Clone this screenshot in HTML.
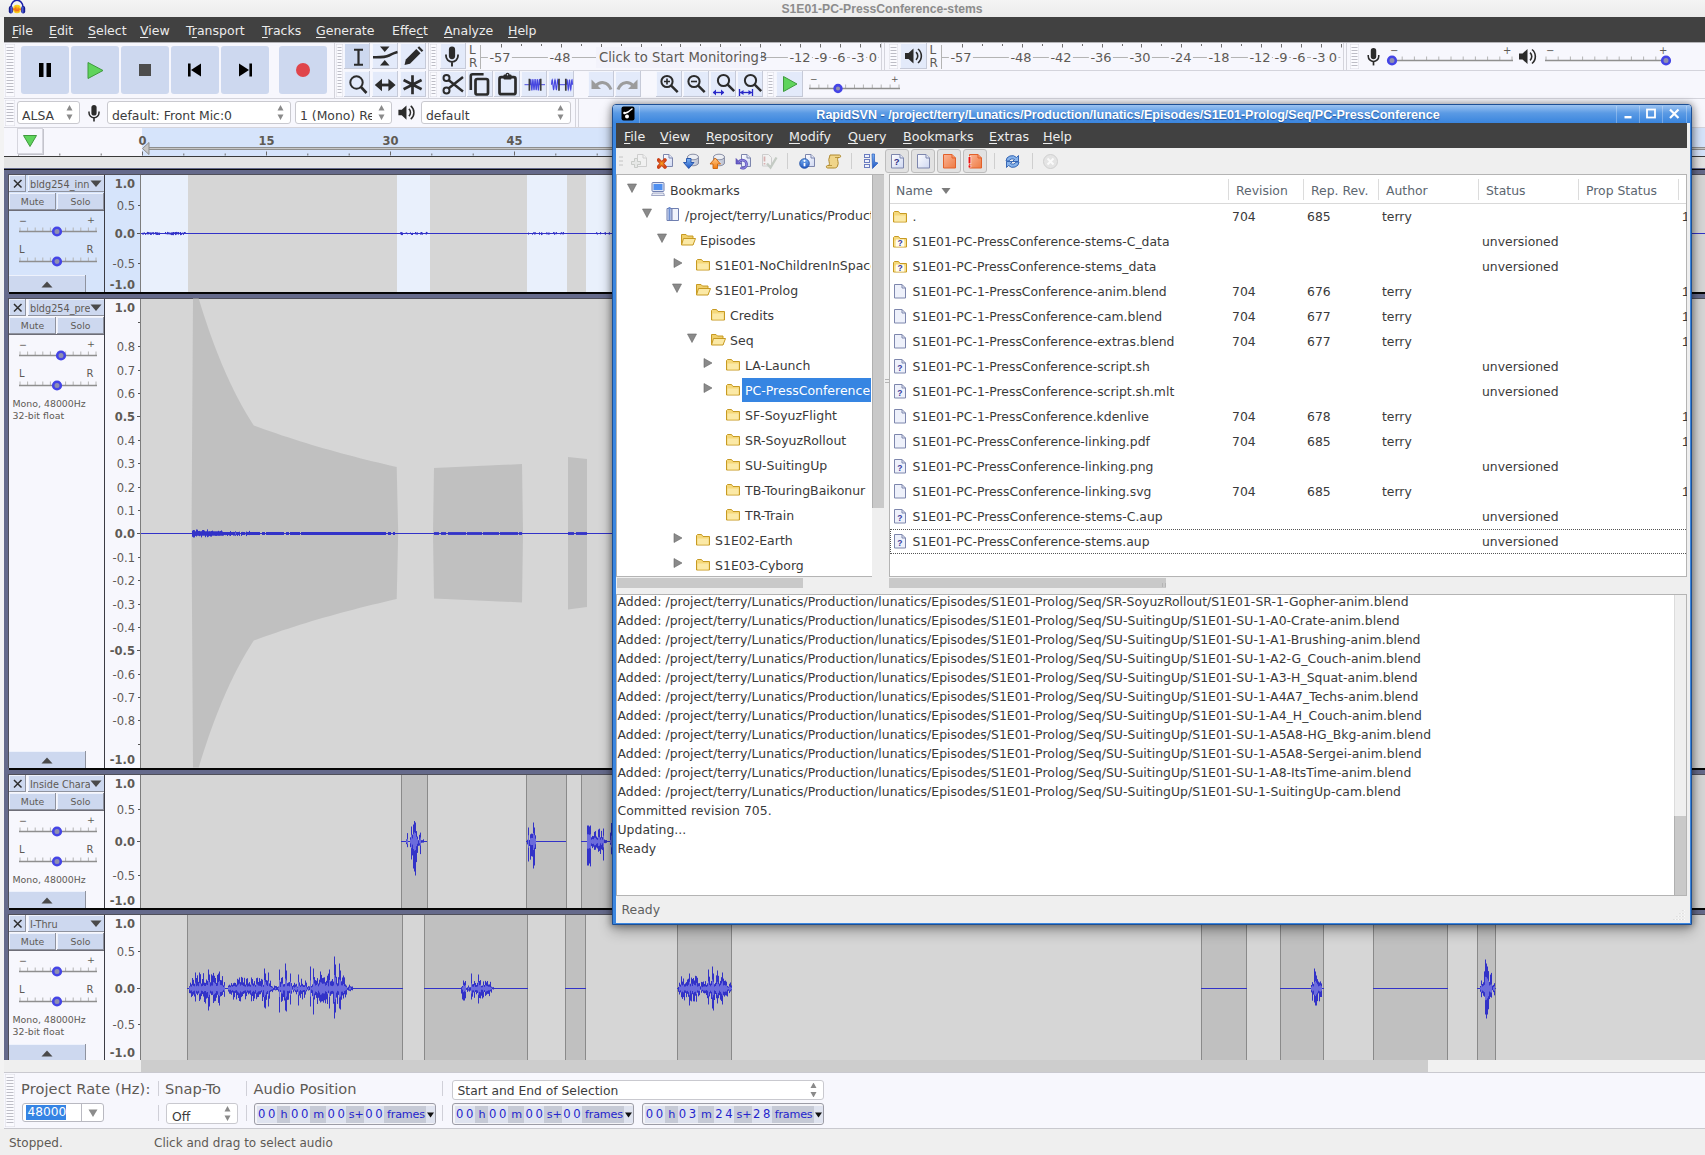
<!DOCTYPE html>
<html><head><meta charset="utf-8"><title>Audacity and RapidSVN</title><style>
html,body{margin:0;padding:0}
body{width:1705px;height:1155px;position:relative;overflow:hidden;background:#efefef;font-family:'DejaVu Sans','Liberation Sans',sans-serif}
div,svg{position:absolute;display:block}
.t{white-space:pre;font-family:'DejaVu Sans','Liberation Sans',sans-serif}
.s{font-family:'DejaVu Sans','Liberation Sans',sans-serif}
u{text-decoration:underline;text-underline-offset:2px}
span.dg{background:#cfd4e4;padding:0 1px}
#svn{overflow:visible}
</style></head>
<body>
<div style="left:0px;top:0px;width:1705px;height:17px;background:linear-gradient(#f4f4f4,#ebebeb)"></div>
<div class="t" style="left:682px;top:1px;width:400px;text-align:center;font:bold 12.2px 'Liberation Sans',sans-serif;color:#8c8c8c;line-height:17px">S1E01-PC-PressConference-stems</div>
<svg style="left:8px;top:0px;" width="18" height="15" viewBox="0 0 18 15"><path d="M3 9 V7 a6 6.800 0 0 1 12 0 V9" fill="none" stroke="#1a1fa6" stroke-width="1.500"/>
<rect x=".800" y="6" width="4" height="7.500" rx="2" fill="#141a8c"/><rect x="13.200" y="6" width="4" height="7.500" rx="2" fill="#141a8c"/>
<rect x="2.500" y="6.500" width="1.500" height="6.500" rx=".700" fill="#4a5ad8"/><rect x="14" y="6.500" width="1.500" height="6.500" rx=".700" fill="#4a5ad8"/>
<ellipse cx="9" cy="9" rx="3.900" ry="4.300" fill="#f9d21e"/><path d="M5 9.200L6.200 7.600 7 9.800 8 5.600 9 11.800 10 6.200 11 10.200 11.800 8 13 9.200 11.800 10.600 11 9.400 10 12.600 9 8.600 8 12.800 7 9.200 6.200 11z" fill="#f04a18"/><path d="M5.500 9.200h7" stroke="#f9a01b" stroke-width=".7"/></svg>
<div style="left:0px;top:17px;width:4px;height:1138px;background:#f3f3f3"></div>
<div style="left:4px;top:17px;width:1701px;height:25px;background:#414141"></div>
<div class="t" style="left:12px;top:22px;font-size:12.5px;color:#ececec;line-height:18px"><u>F</u>ile</div>
<div class="t" style="left:49px;top:22px;font-size:12.5px;color:#ececec;line-height:18px"><u>E</u>dit</div>
<div class="t" style="left:88px;top:22px;font-size:12.5px;color:#ececec;line-height:18px"><u>S</u>elect</div>
<div class="t" style="left:140px;top:22px;font-size:12.5px;color:#ececec;line-height:18px"><u>V</u>iew</div>
<div class="t" style="left:186px;top:22px;font-size:12.5px;color:#ececec;line-height:18px">T<u>r</u>ansport</div>
<div class="t" style="left:262px;top:22px;font-size:12.5px;color:#ececec;line-height:18px"><u>T</u>racks</div>
<div class="t" style="left:316px;top:22px;font-size:12.5px;color:#ececec;line-height:18px"><u>G</u>enerate</div>
<div class="t" style="left:392px;top:22px;font-size:12.5px;color:#ececec;line-height:18px">Effe<u>c</u>t</div>
<div class="t" style="left:444px;top:22px;font-size:12.5px;color:#ececec;line-height:18px"><u>A</u>nalyze</div>
<div class="t" style="left:508px;top:22px;font-size:12.5px;color:#ececec;line-height:18px"><u>H</u>elp</div>
<div style="left:4px;top:42px;width:1701px;height:1px;background:#b4b4b8;z-index:1"></div>
<div style="left:4px;top:42px;width:1701px;height:86px;background:#f7f7fd"></div>
<div style="left:428px;top:70px;width:1277px;height:1px;background:#d4d4dc"></div>
<div style="left:4px;top:98px;width:1701px;height:1px;background:#d4d4dc"></div>
<div style="left:4px;top:127px;width:1701px;height:1px;background:#d4d4dc"></div>
<div style="left:334px;top:43px;width:1px;height:55px;background:#d4d4dc"></div>
<div style="left:428px;top:43px;width:1px;height:55px;background:#d4d4dc"></div>
<svg style="left:5px;top:44px;" width="10" height="53" viewBox="0 0 10 53"><rect width="10" height="53" fill="#fbfbff" stroke="#d9d9e2"/><rect x="1.5" y="3" width="7" height="1" fill="#bdbdc6"/><rect x="1.5" y="6" width="7" height="1" fill="#bdbdc6"/><rect x="1.5" y="9" width="7" height="1" fill="#bdbdc6"/><rect x="1.5" y="12" width="7" height="1" fill="#bdbdc6"/><rect x="1.5" y="15" width="7" height="1" fill="#bdbdc6"/><rect x="1.5" y="18" width="7" height="1" fill="#bdbdc6"/><rect x="1.5" y="21" width="7" height="1" fill="#bdbdc6"/><rect x="1.5" y="24" width="7" height="1" fill="#bdbdc6"/><rect x="1.5" y="27" width="7" height="1" fill="#bdbdc6"/><rect x="1.5" y="30" width="7" height="1" fill="#bdbdc6"/><rect x="1.5" y="33" width="7" height="1" fill="#bdbdc6"/><rect x="1.5" y="36" width="7" height="1" fill="#bdbdc6"/><rect x="1.5" y="39" width="7" height="1" fill="#bdbdc6"/><rect x="1.5" y="42" width="7" height="1" fill="#bdbdc6"/><rect x="1.5" y="45" width="7" height="1" fill="#bdbdc6"/><rect x="1.5" y="48" width="7" height="1" fill="#bdbdc6"/></svg>
<div style="left:21px;top:46px;width:48px;height:48px;background:#cdd8ef;border-radius:3px"></div>
<div style="left:71px;top:46px;width:48px;height:48px;background:#cdd8ef;border-radius:3px"></div>
<div style="left:121px;top:46px;width:48px;height:48px;background:#cdd8ef;border-radius:3px"></div>
<div style="left:171px;top:46px;width:48px;height:48px;background:#cdd8ef;border-radius:3px"></div>
<div style="left:221px;top:46px;width:48px;height:48px;background:#cdd8ef;border-radius:3px"></div>
<div style="left:279px;top:46px;width:48px;height:48px;background:#cdd8ef;border-radius:3px"></div>
<svg style="left:21px;top:46px;" width="48" height="48" viewBox="0 0 48 48"><rect x="18" y="17" width="4.5" height="14" fill="#000"/><rect x="25.5" y="17" width="4.5" height="14" fill="#000"/></svg>
<svg style="left:71px;top:46px;" width="48" height="48" viewBox="0 0 48 48"><path d="M17 16.5 L32 24.5 L17 32.5 Z" fill="#5fd45c" stroke="#3f9a3d" stroke-width="1"/></svg>
<svg style="left:121px;top:46px;" width="48" height="48" viewBox="0 0 48 48"><rect x="18" y="18" width="12" height="12" fill="#4d4d4d"/></svg>
<svg style="left:171px;top:46px;" width="48" height="48" viewBox="0 0 48 48"><rect x="17" y="17.5" width="2.6" height="13" fill="#000"/><path d="M30 17.5 L20 24 L30 30.5 Z" fill="#000"/></svg>
<svg style="left:221px;top:46px;" width="48" height="48" viewBox="0 0 48 48"><rect x="28.4" y="17.5" width="2.6" height="13" fill="#000"/><path d="M18 17.5 L28 24 L18 30.5 Z" fill="#000"/></svg>
<svg style="left:279px;top:46px;" width="48" height="48" viewBox="0 0 48 48"><circle cx="24" cy="24" r="7" fill="#e0454b"/></svg>
<svg style="left:336px;top:44px;" width="7" height="53" viewBox="0 0 7 53"><rect width="7" height="53" fill="#fbfbff" stroke="#d9d9e2"/><rect x="1.5" y="3" width="4" height="1" fill="#bdbdc6"/><rect x="1.5" y="6" width="4" height="1" fill="#bdbdc6"/><rect x="1.5" y="9" width="4" height="1" fill="#bdbdc6"/><rect x="1.5" y="12" width="4" height="1" fill="#bdbdc6"/><rect x="1.5" y="15" width="4" height="1" fill="#bdbdc6"/><rect x="1.5" y="18" width="4" height="1" fill="#bdbdc6"/><rect x="1.5" y="21" width="4" height="1" fill="#bdbdc6"/><rect x="1.5" y="24" width="4" height="1" fill="#bdbdc6"/><rect x="1.5" y="27" width="4" height="1" fill="#bdbdc6"/><rect x="1.5" y="30" width="4" height="1" fill="#bdbdc6"/><rect x="1.5" y="33" width="4" height="1" fill="#bdbdc6"/><rect x="1.5" y="36" width="4" height="1" fill="#bdbdc6"/><rect x="1.5" y="39" width="4" height="1" fill="#bdbdc6"/><rect x="1.5" y="42" width="4" height="1" fill="#bdbdc6"/><rect x="1.5" y="45" width="4" height="1" fill="#bdbdc6"/><rect x="1.5" y="48" width="4" height="1" fill="#bdbdc6"/></svg>
<div style="left:344px;top:43px;width:26px;height:26px;background:#cdd8ef;box-shadow:inset -1px -1px 0 #c6cad8, inset 1px 1px 0 #f4f6fd"></div>
<div style="left:372px;top:43px;width:26px;height:26px;background:#e3eafa;box-shadow:inset -1px -1px 0 #c6cad8, inset 1px 1px 0 #f4f6fd"></div>
<div style="left:400px;top:43px;width:26px;height:26px;background:#e3eafa;box-shadow:inset -1px -1px 0 #c6cad8, inset 1px 1px 0 #f4f6fd"></div>
<div style="left:344px;top:71px;width:26px;height:26px;background:#e3eafa;box-shadow:inset -1px -1px 0 #c6cad8, inset 1px 1px 0 #f4f6fd"></div>
<div style="left:372px;top:71px;width:26px;height:26px;background:#e3eafa;box-shadow:inset -1px -1px 0 #c6cad8, inset 1px 1px 0 #f4f6fd"></div>
<div style="left:400px;top:71px;width:26px;height:26px;background:#e3eafa;box-shadow:inset -1px -1px 0 #c6cad8, inset 1px 1px 0 #f4f6fd"></div>
<svg style="left:344px;top:43px;" width="26" height="26" viewBox="0 0 26 26"><path d="M10 6.800h9M10 21.700h9" stroke="#2b2b2b" stroke-width="2" fill="none"/><path d="M14.500 6.500v15.500" stroke="#2b2b2b" stroke-width="2.200" fill="none"/></svg>
<svg style="left:372px;top:43px;" width="26" height="26" viewBox="0 0 26 26"><path d="M8 3.500h9.500l-4.750 5.500zM8 22.500h9.500l-4.750-5.500z" fill="#2b2b2b"/><path d="M1 14.200C8 14.200 13 14.500 17 12.500S23 9.500 25.500 9" stroke="#2b2b2b" stroke-width="2.600" fill="none"/></svg>
<svg style="left:400px;top:43px;" width="26" height="26" viewBox="0 0 26 26"><path d="M4.5 22l1.3-5.500 10.500-10.500 4.200 4.200-10.500 10.500z" fill="#2b2b2b"/><path d="M17.500 4.800l1.600-1.600 4.200 4.200-1.600 1.600z" fill="#2b2b2b"/></svg>
<svg style="left:344px;top:71px;" width="26" height="26" viewBox="0 0 26 26"><circle cx="12.500" cy="11.500" r="6.200" fill="none" stroke="#2b2b2b" stroke-width="2"/><path d="M17 16l5.500 6" stroke="#2b2b2b" stroke-width="2.600"/></svg>
<svg style="left:372px;top:71px;" width="26" height="26" viewBox="0 0 26 26"><path d="M8 14h10" stroke="#2b2b2b" stroke-width="2.800"/><path d="M2.800 14l7.200-6.200v12.400zM23.600 14l-7.200-6.200v12.400z" fill="#2b2b2b"/></svg>
<svg style="left:400px;top:71px;" width="26" height="26" viewBox="0 0 26 26"><path d="M12.500 4.200v19M3.600 9l18 9.200M21.600 9l-18 9.200" stroke="#2b2b2b" stroke-width="2.700"/></svg>
<svg style="left:430px;top:44px;" width="7" height="25" viewBox="0 0 7 25"><rect width="7" height="25" fill="#fbfbff" stroke="#d9d9e2"/><rect x="1.5" y="3" width="4" height="1" fill="#bdbdc6"/><rect x="1.5" y="6" width="4" height="1" fill="#bdbdc6"/><rect x="1.5" y="9" width="4" height="1" fill="#bdbdc6"/><rect x="1.5" y="12" width="4" height="1" fill="#bdbdc6"/><rect x="1.5" y="15" width="4" height="1" fill="#bdbdc6"/><rect x="1.5" y="18" width="4" height="1" fill="#bdbdc6"/><rect x="1.5" y="21" width="4" height="1" fill="#bdbdc6"/></svg>
<svg style="left:430px;top:72px;" width="7" height="25" viewBox="0 0 7 25"><rect width="7" height="25" fill="#fbfbff" stroke="#d9d9e2"/><rect x="1.5" y="3" width="4" height="1" fill="#bdbdc6"/><rect x="1.5" y="6" width="4" height="1" fill="#bdbdc6"/><rect x="1.5" y="9" width="4" height="1" fill="#bdbdc6"/><rect x="1.5" y="12" width="4" height="1" fill="#bdbdc6"/><rect x="1.5" y="15" width="4" height="1" fill="#bdbdc6"/><rect x="1.5" y="18" width="4" height="1" fill="#bdbdc6"/><rect x="1.5" y="21" width="4" height="1" fill="#bdbdc6"/></svg>
<div style="left:440px;top:43px;width:26px;height:26px;background:#e3eafa;box-shadow:inset -1px -1px 0 #c6cad8, inset 1px 1px 0 #f4f6fd"></div>
<svg style="left:440px;top:43px;" width="26" height="26" viewBox="0 0 26 26"><g transform="translate(12,13.200) scale(1.2)"><rect x="-2.6" y="-8" width="5.2" height="10.5" rx="2.6" fill="#2b2b2b"/><path d="M-5 -1.5v1.2a5 5 0 0 0 10 0v-1.2" fill="none" stroke="#2b2b2b" stroke-width="1.5"/><path d="M0 5v3.5" stroke="#2b2b2b" stroke-width="1.6"/></g></svg>
<div class="t" style="left:469px;top:44px;font-size:12px;color:#5e5a55;line-height:13px">L</div>
<div class="t" style="left:469px;top:56.5px;font-size:12px;color:#5e5a55;line-height:13px">R</div>
<svg style="left:480px;top:43px;" width="402" height="27" viewBox="0 0 402 27"><path d="M21.5 1v3.5M41.5 1v2M61.5 1v2M81.5 1v3.5M101.5 1v2M121.5 1v3.5M141.5 1v2M161.5 1v3.5M181.5 1v2M200.5 1v3.5M220.5 1v2M240.5 1v3.5M260.5 1v2M280.5 1v3.5M300.5 1v2M320.5 1v3.5M340.5 1v3.5M360.5 1v3.5M380.5 1v3.5M400.5 1v3.5" stroke="#6e6e6e" stroke-width="1"/><path d="M.5 2V26M.5 14.500H399" stroke="#b4b4b4" stroke-width="1" fill="none"/></svg>
<div class="t" style="left:500px;top:47.7px;transform:translateX(-50%);background:#f7f7fd;padding:0 1.5px;font-size:13px;color:#5e5a55;line-height:19px">-57</div>
<div class="t" style="left:560px;top:47.7px;transform:translateX(-50%);background:#f7f7fd;padding:0 1.5px;font-size:13px;color:#5e5a55;line-height:19px">-48</div>
<div class="t" style="left:800px;top:47.7px;transform:translateX(-50%);background:#f7f7fd;padding:0 1.5px;font-size:13px;color:#5e5a55;line-height:19px">-12</div>
<div class="t" style="left:821px;top:47.7px;transform:translateX(-50%);background:#f7f7fd;padding:0 1.5px;font-size:13px;color:#5e5a55;line-height:19px">-9</div>
<div class="t" style="left:839px;top:47.7px;transform:translateX(-50%);background:#f7f7fd;padding:0 1.5px;font-size:13px;color:#5e5a55;line-height:19px">-6</div>
<div class="t" style="left:858px;top:47.7px;transform:translateX(-50%);background:#f7f7fd;padding:0 1.5px;font-size:13px;color:#5e5a55;line-height:19px">-3</div>
<div class="t" style="left:873px;top:47.7px;transform:translateX(-50%);background:#f7f7fd;padding:0 1.5px;font-size:13px;color:#5e5a55;line-height:19px">0</div>
<div style="left:596px;top:47px;width:164px;height:21px;background:#f3f3fb"></div>
<div class="t" style="left:599px;top:48px;font-size:13.2px;color:#5e5a55;line-height:19px">Click to Start Monitoring</div>
<div class="t" style="left:761px;top:47px;font-size:13px;color:#5e5a55;line-height:19px;width:6px;overflow:hidden;direction:rtl">8</div>
<div style="left:881px;top:43px;width:1px;height:27px;background:#d4d4dc"></div>
<div style="left:884px;top:43px;width:1px;height:27px;background:#d4d4dc"></div>
<svg style="left:889px;top:44px;" width="9" height="25" viewBox="0 0 9 25"><rect width="9" height="25" fill="#fbfbff" stroke="#d9d9e2"/><rect x="1.5" y="3" width="6" height="1" fill="#bdbdc6"/><rect x="1.5" y="6" width="6" height="1" fill="#bdbdc6"/><rect x="1.5" y="9" width="6" height="1" fill="#bdbdc6"/><rect x="1.5" y="12" width="6" height="1" fill="#bdbdc6"/><rect x="1.5" y="15" width="6" height="1" fill="#bdbdc6"/><rect x="1.5" y="18" width="6" height="1" fill="#bdbdc6"/><rect x="1.5" y="21" width="6" height="1" fill="#bdbdc6"/></svg>
<div style="left:900px;top:43px;width:27px;height:26px;background:#e3eafa;box-shadow:inset -1px -1px 0 #c6cad8, inset 1px 1px 0 #f4f6fd"></div>
<svg style="left:900px;top:43px;" width="27" height="26" viewBox="0 0 27 26"><g transform="translate(13,13)"><path d="M-8 -3h3.5l5-4.5v15l-5-4.5h-3.5z" fill="#2b2b2b"/><path d="M3 -3.8a5 5 0 0 1 0 7.6" fill="none" stroke="#2b2b2b" stroke-width="1.6"/><path d="M5 -7a9 9 0 0 1 0 14" fill="none" stroke="#2b2b2b" stroke-width="1.6"/></g></svg>
<div class="t" style="left:929.5px;top:44px;font-size:12px;color:#5e5a55;line-height:13px">L</div>
<div class="t" style="left:929.5px;top:56.5px;font-size:12px;color:#5e5a55;line-height:13px">R</div>
<svg style="left:940.6px;top:43px;" width="402.4" height="27" viewBox="0 0 402.4 27"><path d="M21.5 1v3.5M41.5 1v2M61.5 1v2M81.5 1v3.5M101.5 1v2M121.5 1v3.5M141.5 1v2M161.5 1v3.5M181.5 1v2M200.5 1v3.5M220.5 1v2M240.5 1v3.5M260.5 1v2M280.5 1v3.5M300.5 1v2M320.5 1v3.5M340.5 1v3.5M360.5 1v3.5M380.5 1v3.5M400.5 1v3.5" stroke="#6e6e6e" stroke-width="1"/><path d="M.5 2V26M.5 14.500H399.4" stroke="#b4b4b4" stroke-width="1" fill="none"/></svg>
<div class="t" style="left:961px;top:47.7px;transform:translateX(-50%);background:#f7f7fd;padding:0 1.5px;font-size:13px;color:#5e5a55;line-height:19px">-57</div>
<div class="t" style="left:1021px;top:47.7px;transform:translateX(-50%);background:#f7f7fd;padding:0 1.5px;font-size:13px;color:#5e5a55;line-height:19px">-48</div>
<div class="t" style="left:1061px;top:47.7px;transform:translateX(-50%);background:#f7f7fd;padding:0 1.5px;font-size:13px;color:#5e5a55;line-height:19px">-42</div>
<div class="t" style="left:1101px;top:47.7px;transform:translateX(-50%);background:#f7f7fd;padding:0 1.5px;font-size:13px;color:#5e5a55;line-height:19px">-36</div>
<div class="t" style="left:1140px;top:47.7px;transform:translateX(-50%);background:#f7f7fd;padding:0 1.5px;font-size:13px;color:#5e5a55;line-height:19px">-30</div>
<div class="t" style="left:1181px;top:47.7px;transform:translateX(-50%);background:#f7f7fd;padding:0 1.5px;font-size:13px;color:#5e5a55;line-height:19px">-24</div>
<div class="t" style="left:1219px;top:47.7px;transform:translateX(-50%);background:#f7f7fd;padding:0 1.5px;font-size:13px;color:#5e5a55;line-height:19px">-18</div>
<div class="t" style="left:1260px;top:47.7px;transform:translateX(-50%);background:#f7f7fd;padding:0 1.5px;font-size:13px;color:#5e5a55;line-height:19px">-12</div>
<div class="t" style="left:1281px;top:47.7px;transform:translateX(-50%);background:#f7f7fd;padding:0 1.5px;font-size:13px;color:#5e5a55;line-height:19px">-9</div>
<div class="t" style="left:1299px;top:47.7px;transform:translateX(-50%);background:#f7f7fd;padding:0 1.5px;font-size:13px;color:#5e5a55;line-height:19px">-6</div>
<div class="t" style="left:1319px;top:47.7px;transform:translateX(-50%);background:#f7f7fd;padding:0 1.5px;font-size:13px;color:#5e5a55;line-height:19px">-3</div>
<div class="t" style="left:1333px;top:47.7px;transform:translateX(-50%);background:#f7f7fd;padding:0 1.5px;font-size:13px;color:#5e5a55;line-height:19px">0</div>
<div style="left:1343px;top:43px;width:1px;height:27px;background:#d4d4dc"></div>
<div style="left:1346px;top:43px;width:1px;height:27px;background:#d4d4dc"></div>
<svg style="left:1350px;top:44px;" width="9" height="25" viewBox="0 0 9 25"><rect width="9" height="25" fill="#fbfbff" stroke="#d9d9e2"/><rect x="1.5" y="3" width="6" height="1" fill="#bdbdc6"/><rect x="1.5" y="6" width="6" height="1" fill="#bdbdc6"/><rect x="1.5" y="9" width="6" height="1" fill="#bdbdc6"/><rect x="1.5" y="12" width="6" height="1" fill="#bdbdc6"/><rect x="1.5" y="15" width="6" height="1" fill="#bdbdc6"/><rect x="1.5" y="18" width="6" height="1" fill="#bdbdc6"/><rect x="1.5" y="21" width="6" height="1" fill="#bdbdc6"/></svg>
<svg style="left:1361px;top:43px;" width="26" height="27" viewBox="0 0 26 27"><g transform="translate(12.5,13.5) scale(1.05)"><rect x="-2.6" y="-8" width="5.2" height="10.5" rx="2.6" fill="#2b2b2b"/><path d="M-5 -1.5v1.2a5 5 0 0 0 10 0v-1.2" fill="none" stroke="#2b2b2b" stroke-width="1.5"/><path d="M0 5v3.5" stroke="#2b2b2b" stroke-width="1.6"/></g></svg>
<svg style="left:1515px;top:43px;" width="27" height="27" viewBox="0 0 27 27"><g transform="translate(12,13.5)"><path d="M-8 -3h3.5l5-4.5v15l-5-4.5h-3.5z" fill="#2b2b2b"/><path d="M3 -3.8a5 5 0 0 1 0 7.6" fill="none" stroke="#2b2b2b" stroke-width="1.6"/><path d="M5 -7a9 9 0 0 1 0 14" fill="none" stroke="#2b2b2b" stroke-width="1.6"/></g></svg>
<svg style="left:1383px;top:49.0px;" width="136" height="20" viewBox="0 0 136 20"><path d="M7.0 11v-3.5M19.2 11v-3.5M31.4 11v-3.5M43.6 11v-3.5M55.8 11v-3.5M68.0 11v-3.5M80.2 11v-3.5M92.4 11v-3.5M104.6 11v-3.5M116.8 11v-3.5M129.0 11v-3.5" stroke="#b4b4b4" stroke-width="1"/><path d="M6 11.5H130" stroke="#8f8f8f" stroke-width="1.6"/><circle cx="9" cy="11.5" r="3.8" fill="#8f8fb0" stroke="#4444e6" stroke-width="2.6"/></svg>
<svg style="left:1539px;top:49.0px;" width="136" height="20" viewBox="0 0 136 20"><path d="M7.0 11v-3.5M19.2 11v-3.5M31.4 11v-3.5M43.6 11v-3.5M55.8 11v-3.5M68.0 11v-3.5M80.2 11v-3.5M92.4 11v-3.5M104.6 11v-3.5M116.8 11v-3.5M129.0 11v-3.5" stroke="#b4b4b4" stroke-width="1"/><path d="M6 11.5H130" stroke="#8f8f8f" stroke-width="1.6"/><circle cx="127" cy="11.5" r="3.8" fill="#8f8fb0" stroke="#4444e6" stroke-width="2.6"/></svg>
<div class="t" style="left:1390px;top:45px;font-size:10px;color:#5e5a55;line-height:12px">−</div>
<div class="t" style="left:1503px;top:45px;font-size:10px;color:#5e5a55;line-height:12px">+</div>
<div class="t" style="left:1546px;top:45px;font-size:10px;color:#5e5a55;line-height:12px">−</div>
<div class="t" style="left:1659px;top:45px;font-size:10px;color:#5e5a55;line-height:12px">+</div>
<div style="left:440px;top:71px;width:26px;height:26px;background:#e3eafa;box-shadow:inset -1px -1px 0 #c6cad8, inset 1px 1px 0 #f4f6fd"></div>
<div style="left:467px;top:71px;width:26px;height:26px;background:#e3eafa;box-shadow:inset -1px -1px 0 #c6cad8, inset 1px 1px 0 #f4f6fd"></div>
<div style="left:494px;top:71px;width:26px;height:26px;background:#e3eafa;box-shadow:inset -1px -1px 0 #c6cad8, inset 1px 1px 0 #f4f6fd"></div>
<div style="left:521px;top:71px;width:26px;height:26px;background:#e3eafa;box-shadow:inset -1px -1px 0 #c6cad8, inset 1px 1px 0 #f4f6fd"></div>
<div style="left:548px;top:71px;width:26px;height:26px;background:#e3eafa;box-shadow:inset -1px -1px 0 #c6cad8, inset 1px 1px 0 #f4f6fd"></div>
<div style="left:588px;top:71px;width:26px;height:26px;background:#e3eafa;box-shadow:inset -1px -1px 0 #c6cad8, inset 1px 1px 0 #f4f6fd"></div>
<div style="left:615px;top:71px;width:26px;height:26px;background:#e3eafa;box-shadow:inset -1px -1px 0 #c6cad8, inset 1px 1px 0 #f4f6fd"></div>
<div style="left:656px;top:71px;width:26px;height:26px;background:#e3eafa;box-shadow:inset -1px -1px 0 #c6cad8, inset 1px 1px 0 #f4f6fd"></div>
<div style="left:683px;top:71px;width:26px;height:26px;background:#e3eafa;box-shadow:inset -1px -1px 0 #c6cad8, inset 1px 1px 0 #f4f6fd"></div>
<div style="left:710px;top:71px;width:26px;height:26px;background:#e3eafa;box-shadow:inset -1px -1px 0 #c6cad8, inset 1px 1px 0 #f4f6fd"></div>
<div style="left:737px;top:71px;width:26px;height:26px;background:#e3eafa;box-shadow:inset -1px -1px 0 #c6cad8, inset 1px 1px 0 #f4f6fd"></div>
<svg style="left:440px;top:71px;" width="26" height="26" viewBox="0 0 26 26"><circle cx="6.500" cy="7" r="3" fill="none" stroke="#2b2b2b" stroke-width="2"/><circle cx="6.500" cy="19.500" r="3" fill="none" stroke="#2b2b2b" stroke-width="2"/><path d="M8.500 9l14.500 11.500M8.500 17.500l14.500-11.500" stroke="#2b2b2b" stroke-width="2.400"/></svg>
<svg style="left:467px;top:71px;" width="26" height="26" viewBox="0 0 26 26"><path d="M3.800 19v-14a1.800 1.800 0 0 1 1.800-1.800h11" fill="none" stroke="#2b2b2b" stroke-width="2.600"/><rect x="8.500" y="8" width="12.500" height="15.500" rx="1.800" fill="none" stroke="#2b2b2b" stroke-width="2.700"/></svg>
<svg style="left:494px;top:71px;" width="26" height="26" viewBox="0 0 26 26"><rect x="5.500" y="6.200" width="16" height="17" rx="1.800" fill="none" stroke="#2b2b2b" stroke-width="2.700"/><rect x="9.500" y="3.500" width="8" height="5" rx="1" fill="#2b2b2b"/><circle cx="13.500" cy="3.800" r="2" fill="#2b2b2b"/><circle cx="13.500" cy="3.800" r=".700" fill="#e3eafa"/></svg>
<svg style="left:521px;top:71px;" width="26" height="26" viewBox="0 0 26 26"><path d="M3.500 13.700H24" stroke="#4848e0" stroke-width="1"/><polyline points="9.20,13.70 9.45,10.05 9.70,8.24 9.95,9.17 10.21,12.38 10.46,16.26 10.71,18.84 10.96,18.84 11.21,16.26 11.46,12.38 11.71,9.17 11.96,8.24 12.22,10.05 12.47,13.70 12.72,17.35 12.97,19.16 13.22,18.23 13.47,15.02 13.72,11.14 13.97,8.56 14.23,8.56 14.48,11.14 14.73,15.02 14.98,18.23 15.23,19.16 15.48,17.35 15.73,13.70 15.98,10.05 16.24,8.24 16.49,9.17 16.74,12.38 16.99,16.26 17.24,18.84 17.49,18.84 17.74,16.26 17.99,12.38 18.25,9.17 18.50,8.24 18.75,10.05 19.00,13.70" fill="none" stroke="#4848e0" stroke-width="1.1"/><path d="M8.400 7.700v12M19.700 7.700v12" stroke="#3a3a3a" stroke-width="1.700"/></svg>
<svg style="left:548px;top:71px;" width="26" height="26" viewBox="0 0 26 26"><path d="M11 13.700h7" stroke="#4848e0" stroke-width="1"/><polyline points="3.50,13.70 3.75,11.04 4.00,9.20 4.25,8.73 4.50,9.79 4.75,12.05 5.00,14.81 5.25,17.24 5.50,18.57 5.75,18.42 6.00,16.82 6.25,14.26 6.50,11.53 6.75,9.47 7.00,8.70 7.25,9.47 7.50,11.53 7.75,14.26 8.00,16.82 8.25,18.42 8.50,18.57 8.75,17.24 9.00,14.81 9.25,12.05 9.50,9.79 9.75,8.73 10.00,9.20 10.25,11.04 10.50,13.70" fill="none" stroke="#4848e0" stroke-width="1.1"/><polyline points="18.50,13.70 18.75,10.66 19.00,8.87 19.25,9.08 19.50,11.20 19.75,14.35 20.00,17.24 20.25,18.66 20.50,18.03 20.75,15.61 21.00,12.41 21.25,9.73 21.50,8.70 21.75,9.73 22.00,12.41 22.25,15.61 22.50,18.03 22.75,18.66 23.00,17.24 23.25,14.35 23.50,11.20 23.75,9.08 24.00,8.87 24.25,10.66 24.50,13.70" fill="none" stroke="#4848e0" stroke-width="1.1"/><path d="M11 7.700v12M17.800 7.700v12" stroke="#3a3a3a" stroke-width="1.700"/></svg>
<svg style="left:588px;top:71px;" width="26" height="26" viewBox="0 0 26 26"><path d="M3.500 8.500v9.500h9.500z" fill="#9c9c9c"/><path d="M7.500 15c4.500-5 12-5 15.500 3.500" fill="none" stroke="#9c9c9c" stroke-width="3"/></svg>
<svg style="left:615px;top:71px;" width="26" height="26" viewBox="0 0 26 26"><path d="M22.500 8.500v9.500h-9.500z" fill="#9c9c9c"/><path d="M18.500 15c-4.500-5-12-5-15.500 3.500" fill="none" stroke="#9c9c9c" stroke-width="3"/></svg>
<svg style="left:656px;top:71px;" width="26" height="26" viewBox="0 0 26 26"><circle cx="11" cy="10.5" r="5.6" fill="none" stroke="#2b2b2b" stroke-width="2"/><path d="M15.2 14.7l6.5 6.5" stroke="#2b2b2b" stroke-width="2.5"/><path d="M8 10.5h6M11 7.5v6" stroke="#2b2b2b" stroke-width="1.6"/></svg>
<svg style="left:683px;top:71px;" width="26" height="26" viewBox="0 0 26 26"><circle cx="11" cy="10.5" r="5.6" fill="none" stroke="#2b2b2b" stroke-width="2"/><path d="M15.2 14.7l6.5 6.5" stroke="#2b2b2b" stroke-width="2.5"/><path d="M8 10.5h6" stroke="#2b2b2b" stroke-width="1.6"/></svg>
<svg style="left:710px;top:71px;" width="26" height="26" viewBox="0 0 26 26"><circle cx="13.5" cy="9.5" r="5.6" fill="none" stroke="#2b2b2b" stroke-width="2"/><path d="M17.7 13.7l6.5 6.5" stroke="#2b2b2b" stroke-width="2.5"/><path d="M3 21.5h11" stroke="#2828c8" stroke-width="1.3"/><path d="M6 18.5l-3.2 3 3.2 3zM11 18.5l3.2 3-3.2 3z" fill="#2828c8"/></svg>
<svg style="left:737px;top:71px;" width="26" height="26" viewBox="0 0 26 26"><circle cx="13.5" cy="9.5" r="5.6" fill="none" stroke="#2b2b2b" stroke-width="2"/><path d="M17.7 13.7l6.5 6.5" stroke="#2b2b2b" stroke-width="2.5"/><path d="M2.5 21.5h13" stroke="#2828c8" stroke-width="1.3"/><path d="M2.5 18v7M15.5 18v7" stroke="#2828c8" stroke-width="1.3"/><path d="M3 21.5l3.5-2.6v5.2zM15 21.5l-3.5-2.6v5.2z" fill="#2828c8"/></svg>
<svg style="left:767px;top:72px;" width="7" height="25" viewBox="0 0 7 25"><rect width="7" height="25" fill="#fbfbff" stroke="#d9d9e2"/><rect x="1.5" y="3" width="4" height="1" fill="#bdbdc6"/><rect x="1.5" y="6" width="4" height="1" fill="#bdbdc6"/><rect x="1.5" y="9" width="4" height="1" fill="#bdbdc6"/><rect x="1.5" y="12" width="4" height="1" fill="#bdbdc6"/><rect x="1.5" y="15" width="4" height="1" fill="#bdbdc6"/><rect x="1.5" y="18" width="4" height="1" fill="#bdbdc6"/><rect x="1.5" y="21" width="4" height="1" fill="#bdbdc6"/></svg>
<div style="left:776px;top:71px;width:27px;height:26px;background:#e3eafa;box-shadow:inset -1px -1px 0 #c6cad8, inset 1px 1px 0 #f4f6fd"></div>
<svg style="left:776px;top:71px;" width="27" height="26" viewBox="0 0 27 26"><path d="M7.5 5.5 L21 13 L7.5 20.5 Z" fill="#5fd45c" stroke="#3f9a3d" stroke-width="1"/></svg>
<svg style="left:803px;top:77.0px;" width="103" height="20" viewBox="0 0 103 20"><path d="M7.0 11v-3.5M15.9 11v-3.5M24.8 11v-3.5M33.7 11v-3.5M42.6 11v-3.5M51.5 11v-3.5M60.4 11v-3.5M69.3 11v-3.5M78.2 11v-3.5M87.1 11v-3.5M96.0 11v-3.5" stroke="#b4b4b4" stroke-width="1"/><path d="M6 11.5H97" stroke="#8f8f8f" stroke-width="1.6"/><circle cx="35" cy="11.5" r="3.3999999999999995" fill="#8f8fb0" stroke="#4444e6" stroke-width="2.6"/></svg>
<div class="t" style="left:810px;top:73.5px;font-size:9px;color:#5e5a55;line-height:10px">−</div>
<div class="t" style="left:891px;top:73.5px;font-size:9px;color:#5e5a55;line-height:10px">+</div>
<svg style="left:5px;top:100px;" width="10" height="26" viewBox="0 0 10 26"><rect width="10" height="26" fill="#fbfbff" stroke="#d9d9e2"/><rect x="1.5" y="3" width="7" height="1" fill="#bdbdc6"/><rect x="1.5" y="6" width="7" height="1" fill="#bdbdc6"/><rect x="1.5" y="9" width="7" height="1" fill="#bdbdc6"/><rect x="1.5" y="12" width="7" height="1" fill="#bdbdc6"/><rect x="1.5" y="15" width="7" height="1" fill="#bdbdc6"/><rect x="1.5" y="18" width="7" height="1" fill="#bdbdc6"/><rect x="1.5" y="21" width="7" height="1" fill="#bdbdc6"/></svg>
<div style="left:17px;top:101px;width:63px;height:23px;background:#fff;border:1px solid #c9c9cf;border-radius:3px;box-sizing:border-box"></div>
<div class="t" style="left:22px;top:104.5px;font-size:12.4px;color:#3c3c3c;line-height:22px;height:19px;width:38px;overflow:hidden">ALSA</div>
<svg style="left:65px;top:104px;" width="9" height="17" viewBox="0 0 9 17"><path d="M1.5 6.5L4.5 1.0L7.5 6.5zM1.5 10.5L4.5 16.0L7.5 10.5z" fill="#8a8a8a"/></svg>
<svg style="left:84px;top:100px;" width="20" height="26" viewBox="0 0 20 26"><g transform="translate(10,13)"><rect x="-2.6" y="-8" width="5.2" height="10.5" rx="2.6" fill="#2b2b2b"/><path d="M-5 -1.5v1.2a5 5 0 0 0 10 0v-1.2" fill="none" stroke="#2b2b2b" stroke-width="1.5"/><path d="M0 5v3.5" stroke="#2b2b2b" stroke-width="1.6"/></g></svg>
<div style="left:107px;top:101px;width:184px;height:23px;background:#fff;border:1px solid #c9c9cf;border-radius:3px;box-sizing:border-box"></div>
<div class="t" style="left:112px;top:104.5px;font-size:12.4px;color:#3c3c3c;line-height:22px;height:19px;width:159px;overflow:hidden">default: Front Mic:0</div>
<svg style="left:276px;top:104px;" width="9" height="17" viewBox="0 0 9 17"><path d="M1.5 6.5L4.5 1.0L7.5 6.5zM1.5 10.5L4.5 16.0L7.5 10.5z" fill="#8a8a8a"/></svg>
<div style="left:295px;top:101px;width:97px;height:23px;background:#fff;border:1px solid #c9c9cf;border-radius:3px;box-sizing:border-box"></div>
<div class="t" style="left:300px;top:104.5px;font-size:12.4px;color:#3c3c3c;line-height:22px;height:19px;width:72px;overflow:hidden">1 (Mono) Re</div>
<svg style="left:377px;top:104px;" width="9" height="17" viewBox="0 0 9 17"><path d="M1.5 6.5L4.5 1.0L7.5 6.5zM1.5 10.5L4.5 16.0L7.5 10.5z" fill="#8a8a8a"/></svg>
<svg style="left:395px;top:100px;" width="22" height="26" viewBox="0 0 22 26"><g transform="translate(11,12.5) scale(.95)"><path d="M-8 -3h3.5l5-4.5v15l-5-4.5h-3.5z" fill="#2b2b2b"/><path d="M3 -3.8a5 5 0 0 1 0 7.6" fill="none" stroke="#2b2b2b" stroke-width="1.6"/><path d="M5 -7a9 9 0 0 1 0 14" fill="none" stroke="#2b2b2b" stroke-width="1.6"/></g></svg>
<div style="left:421px;top:101px;width:150px;height:23px;background:#fff;border:1px solid #c9c9cf;border-radius:3px;box-sizing:border-box"></div>
<div class="t" style="left:426px;top:104.5px;font-size:12.4px;color:#3c3c3c;line-height:22px;height:19px;width:125px;overflow:hidden">default</div>
<svg style="left:556px;top:104px;" width="9" height="17" viewBox="0 0 9 17"><path d="M1.5 6.5L4.5 1.0L7.5 6.5zM1.5 10.5L4.5 16.0L7.5 10.5z" fill="#8a8a8a"/></svg>
<div style="left:575px;top:99px;width:1px;height:28px;background:#d4d4dc"></div>
<div style="left:578px;top:99px;width:1px;height:28px;background:#d4d4dc"></div>
<div style="left:4px;top:128px;width:1701px;height:29px;background:#f7f7fd"></div>
<div style="left:142px;top:128px;width:1563px;height:28px;background:#d6e4fb"></div>
<div style="left:146px;top:147px;width:1559px;height:3px;background:#c6c6c6;border-top:1px solid #8e8e8e;border-bottom:1px solid #8e8e8e;box-sizing:border-box"></div>
<div style="left:4px;top:156px;width:1701px;height:1px;background:#3a3a3a"></div>
<svg style="left:0px;top:128px;" width="1705" height="29" viewBox="0 0 1705 29"><path d="M18.5 27.500v-4M59.8 27.500v-2M101.2 27.500v-2M142.5 27.500v-4M183.8 27.500v-2M225.2 27.500v-2M266.5 27.500v-4M307.8 27.500v-2M349.2 27.500v-2M390.5 27.500v-4M431.8 27.500v-2M473.2 27.500v-2M514.5 27.500v-4M555.8 27.500v-2M597.2 27.500v-2M638.5 27.500v-4M679.8 27.500v-2M721.2 27.500v-2M762.5 27.500v-4M803.8 27.500v-2M845.2 27.500v-2M886.5 27.500v-4M927.8 27.500v-2M969.2 27.500v-2M1010.5 27.500v-4M1051.8 27.500v-2M1093.2 27.500v-2M1134.5 27.500v-4M1175.8 27.500v-2M1217.2 27.500v-2M1258.5 27.500v-4M1299.8 27.500v-2M1341.2 27.500v-2M1382.5 27.500v-4M1423.8 27.500v-2M1465.2 27.500v-2M1506.5 27.500v-4M1547.8 27.500v-2M1589.2 27.500v-2M1630.5 27.500v-4M1671.8 27.500v-2" stroke="#6a6a6a" stroke-width="1"/><path d="M142.500 20.500l6.500-6v12z" fill="#c6c6c6" stroke="#8e8e8e" stroke-width="1"/></svg>
<div class="t" style="left:122.5px;top:133.5px;width:40px;text-align:center;font:bold 11.5px 'DejaVu Sans',sans-serif;color:#5e5a55;line-height:15px">0</div>
<div class="t" style="left:246.5px;top:133.5px;width:40px;text-align:center;font:bold 11.5px 'DejaVu Sans',sans-serif;color:#5e5a55;line-height:15px">15</div>
<div class="t" style="left:370.5px;top:133.5px;width:40px;text-align:center;font:bold 11.5px 'DejaVu Sans',sans-serif;color:#5e5a55;line-height:15px">30</div>
<div class="t" style="left:494.5px;top:133.5px;width:40px;text-align:center;font:bold 11.5px 'DejaVu Sans',sans-serif;color:#5e5a55;line-height:15px">45</div>
<div class="t" style="left:618.5px;top:133.5px;width:40px;text-align:center;font:bold 11.5px 'DejaVu Sans',sans-serif;color:#5e5a55;line-height:15px">1:00</div>
<div style="left:17px;top:128px;width:26px;height:26px;background:#f7f7fd;border:1px solid #d6d6de;box-sizing:border-box;box-shadow:1px 1px 0 #c4c4cc"></div>
<svg style="left:17px;top:128px;" width="26" height="26" viewBox="0 0 26 26"><path d="M6.5 7.5h13L13 18.5z" fill="#5fd45c" stroke="#3f9a3d" stroke-width="1"/></svg>
<div style="left:4px;top:157px;width:1701px;height:12px;background:#e4e4e4"></div>
<div style="left:4px;top:168px;width:1701px;height:892px;background:#656a8b"></div>
<div style="left:4px;top:168.7px;width:1701px;height:1.8px;background:#0c0c0c"></div>
<div style="left:8px;top:174px;width:1697px;height:118px;background:#50505a"></div>
<div style="left:9px;top:292px;width:1696px;height:2px;background:#060606"></div>
<div style="left:9px;top:175px;width:95px;height:117px;background:#d6e4fb"></div>
<div style="left:9px;top:175px;width:17px;height:17px;background:#cdd8ef;box-shadow:inset -1px -1px 0 #8f939f, inset 1px 1px 0 #eef2fc"></div>
<svg style="left:9px;top:175px;" width="17" height="17" viewBox="0 0 17 17"><path d="M5 5l7.5 7.5M12.5 5L5 12.5" stroke="#2e2e2e" stroke-width="1.5"/></svg>
<div style="left:28px;top:175px;width:76px;height:17px;background:#cdd8ef;box-shadow:inset 0 -1px 0 #8f939f, inset 1px 1px 0 #eef2fc"></div>
<div class="t" style="left:30px;top:176px;font-size:9.7px;color:#5e5a55;line-height:17px;width:60px;overflow:hidden">bldg254_inn</div>
<svg style="left:89px;top:175px;" width="14" height="17" viewBox="0 0 14 17"><path d="M1.5 5.5h11L7 12z" fill="#4a4a4a"/></svg>
<div style="left:9px;top:193px;width:47px;height:17px;background:#cdd8ef;box-shadow:inset -1px -1px 0 #8f939f, inset 1px 1px 0 #eef2fc"></div>
<div style="left:57px;top:193px;width:47px;height:17px;background:#cdd8ef;box-shadow:inset -1px -1px 0 #8f939f, inset 1px 1px 0 #eef2fc"></div>
<div class="t" style="left:9px;top:194px;width:47px;text-align:center;font-size:9.3px;color:#5e5a55;line-height:16px">Mute</div>
<div class="t" style="left:57px;top:194px;width:47px;text-align:center;font-size:9.3px;color:#5e5a55;line-height:16px">Solo</div>
<div style="left:9px;top:210px;width:95px;height:1px;background:#6e6e78"></div>
<div class="t" style="left:19px;top:216px;font-size:9.5px;color:#5e5a55;line-height:10px">−</div>
<div class="t" style="left:87px;top:215px;font-size:9.5px;color:#5e5a55;line-height:10px">+</div>
<svg style="left:13px;top:219.5px;" width="90" height="20" viewBox="0 0 90 20"><path d="M7.0 11v-3.5M14.6 11v-3.5M22.2 11v-3.5M29.8 11v-3.5M37.4 11v-3.5M45.0 11v-3.5M52.6 11v-3.5M60.2 11v-3.5M67.8 11v-3.5M75.4 11v-3.5M83.0 11v-3.5" stroke="#b4b4b4" stroke-width="1"/><path d="M6 11.5H84" stroke="#8f8f8f" stroke-width="1.6"/><circle cx="44" cy="11.5" r="3.8" fill="#8f8fb0" stroke="#4444e6" stroke-width="2.6"/></svg>
<div class="t" style="left:19px;top:244px;font-size:10px;color:#5e5a55;line-height:11px">L</div>
<div class="t" style="left:86.5px;top:244px;font-size:10px;color:#5e5a55;line-height:11px">R</div>
<svg style="left:13px;top:249.5px;" width="90" height="20" viewBox="0 0 90 20"><path d="M7.0 11v-3.5M14.6 11v-3.5M22.2 11v-3.5M29.8 11v-3.5M37.4 11v-3.5M45.0 11v-3.5M52.6 11v-3.5M60.2 11v-3.5M67.8 11v-3.5M75.4 11v-3.5M83.0 11v-3.5" stroke="#b4b4b4" stroke-width="1"/><path d="M6 11.5H84" stroke="#8f8f8f" stroke-width="1.6"/><circle cx="44" cy="11.5" r="3.8" fill="#8f8fb0" stroke="#4444e6" stroke-width="2.6"/></svg>
<div style="left:9px;top:275px;width:77px;height:17px;background:#cdd8ef;box-shadow:inset -1px 0 0 #8f939f, inset 0 1px 0 #eef2fc"></div>
<svg style="left:9px;top:275px;" width="77" height="17" viewBox="0 0 77 17"><path d="M32.5 12.5h11l-5.5-6z" fill="#4a4a4a"/></svg>
<div style="left:104px;top:175px;width:1px;height:117px;background:#3c3c44"></div>
<div style="left:105px;top:175px;width:35px;height:117px;background:#d6e4fb"></div>
<div style="left:140px;top:175px;width:1px;height:117px;background:#7d7d7d"></div>
<div class="t" style="left:100px;top:175.8px;width:35px;text-align:right;font:bold 11.5px 'DejaVu Sans',sans-serif;color:#5e5a55;line-height:16px">1.0</div>
<div class="t" style="left:100px;top:197.8px;width:35px;text-align:right;font:11.5px 'DejaVu Sans',sans-serif;color:#5e5a55;line-height:16px">0.5</div>
<div style="left:138px;top:205px;width:2px;height:1px;background:#555"></div>
<div class="t" style="left:100px;top:225.8px;width:35px;text-align:right;font:bold 11.5px 'DejaVu Sans',sans-serif;color:#5e5a55;line-height:16px">0.0</div>
<div style="left:137px;top:233px;width:3px;height:1px;background:#555"></div>
<div class="t" style="left:100px;top:255.8px;width:35px;text-align:right;font:11.5px 'DejaVu Sans',sans-serif;color:#5e5a55;line-height:16px">-0.5</div>
<div style="left:138px;top:263px;width:2px;height:1px;background:#555"></div>
<div class="t" style="left:100px;top:276.8px;width:35px;text-align:right;font:bold 11.5px 'DejaVu Sans',sans-serif;color:#5e5a55;line-height:16px">-1.0</div>
<div style="left:8px;top:298px;width:1697px;height:470px;background:#50505a"></div>
<div style="left:9px;top:768px;width:1696px;height:2px;background:#060606"></div>
<div style="left:9px;top:299px;width:95px;height:469px;background:#f7f7fd"></div>
<div style="left:9px;top:299px;width:17px;height:17px;background:#cdd8ef;box-shadow:inset -1px -1px 0 #8f939f, inset 1px 1px 0 #eef2fc"></div>
<svg style="left:9px;top:299px;" width="17" height="17" viewBox="0 0 17 17"><path d="M5 5l7.5 7.5M12.5 5L5 12.5" stroke="#2e2e2e" stroke-width="1.5"/></svg>
<div style="left:28px;top:299px;width:76px;height:17px;background:#cdd8ef;box-shadow:inset 0 -1px 0 #8f939f, inset 1px 1px 0 #eef2fc"></div>
<div class="t" style="left:30px;top:300px;font-size:9.7px;color:#5e5a55;line-height:17px;width:60px;overflow:hidden">bldg254_pre</div>
<svg style="left:89px;top:299px;" width="14" height="17" viewBox="0 0 14 17"><path d="M1.5 5.5h11L7 12z" fill="#4a4a4a"/></svg>
<div style="left:9px;top:317px;width:47px;height:17px;background:#cdd8ef;box-shadow:inset -1px -1px 0 #8f939f, inset 1px 1px 0 #eef2fc"></div>
<div style="left:57px;top:317px;width:47px;height:17px;background:#cdd8ef;box-shadow:inset -1px -1px 0 #8f939f, inset 1px 1px 0 #eef2fc"></div>
<div class="t" style="left:9px;top:318px;width:47px;text-align:center;font-size:9.3px;color:#5e5a55;line-height:16px">Mute</div>
<div class="t" style="left:57px;top:318px;width:47px;text-align:center;font-size:9.3px;color:#5e5a55;line-height:16px">Solo</div>
<div style="left:9px;top:334px;width:95px;height:1px;background:#6e6e78"></div>
<div class="t" style="left:19px;top:340px;font-size:9.5px;color:#5e5a55;line-height:10px">−</div>
<div class="t" style="left:87px;top:339px;font-size:9.5px;color:#5e5a55;line-height:10px">+</div>
<svg style="left:13px;top:343.5px;" width="90" height="20" viewBox="0 0 90 20"><path d="M7.0 11v-3.5M14.6 11v-3.5M22.2 11v-3.5M29.8 11v-3.5M37.4 11v-3.5M45.0 11v-3.5M52.6 11v-3.5M60.2 11v-3.5M67.8 11v-3.5M75.4 11v-3.5M83.0 11v-3.5" stroke="#b4b4b4" stroke-width="1"/><path d="M6 11.5H84" stroke="#8f8f8f" stroke-width="1.6"/><circle cx="48" cy="11.5" r="3.8" fill="#8f8fb0" stroke="#4444e6" stroke-width="2.6"/></svg>
<div class="t" style="left:19px;top:368px;font-size:10px;color:#5e5a55;line-height:11px">L</div>
<div class="t" style="left:86.5px;top:368px;font-size:10px;color:#5e5a55;line-height:11px">R</div>
<svg style="left:13px;top:373.5px;" width="90" height="20" viewBox="0 0 90 20"><path d="M7.0 11v-3.5M14.6 11v-3.5M22.2 11v-3.5M29.8 11v-3.5M37.4 11v-3.5M45.0 11v-3.5M52.6 11v-3.5M60.2 11v-3.5M67.8 11v-3.5M75.4 11v-3.5M83.0 11v-3.5" stroke="#b4b4b4" stroke-width="1"/><path d="M6 11.5H84" stroke="#8f8f8f" stroke-width="1.6"/><circle cx="44" cy="11.5" r="3.8" fill="#8f8fb0" stroke="#4444e6" stroke-width="2.6"/></svg>
<div class="t" style="left:12.5px;top:398px;font-size:9.4px;color:#5e5a55;line-height:12px">Mono, 48000Hz</div>
<div class="t" style="left:12.5px;top:410px;font-size:9.4px;color:#5e5a55;line-height:12px">32-bit float</div>
<div style="left:9px;top:751px;width:77px;height:17px;background:#cdd8ef;box-shadow:inset -1px 0 0 #8f939f, inset 0 1px 0 #eef2fc"></div>
<svg style="left:9px;top:751px;" width="77" height="17" viewBox="0 0 77 17"><path d="M32.5 12.5h11l-5.5-6z" fill="#4a4a4a"/></svg>
<div style="left:104px;top:299px;width:1px;height:469px;background:#3c3c44"></div>
<div style="left:105px;top:299px;width:35px;height:469px;background:#f7f7fd"></div>
<div style="left:140px;top:299px;width:1px;height:469px;background:#7d7d7d"></div>
<div class="t" style="left:100px;top:299.8px;width:35px;text-align:right;font:bold 11.5px 'DejaVu Sans',sans-serif;color:#5e5a55;line-height:16px">1.0</div>
<div style="left:138px;top:322px;width:2px;height:1px;background:#555"></div>
<div class="t" style="left:100px;top:338.8px;width:35px;text-align:right;font:11.5px 'DejaVu Sans',sans-serif;color:#5e5a55;line-height:16px">0.8</div>
<div style="left:138px;top:346px;width:2px;height:1px;background:#555"></div>
<div class="t" style="left:100px;top:362.8px;width:35px;text-align:right;font:11.5px 'DejaVu Sans',sans-serif;color:#5e5a55;line-height:16px">0.7</div>
<div style="left:138px;top:370px;width:2px;height:1px;background:#555"></div>
<div class="t" style="left:100px;top:385.8px;width:35px;text-align:right;font:11.5px 'DejaVu Sans',sans-serif;color:#5e5a55;line-height:16px">0.6</div>
<div style="left:138px;top:393px;width:2px;height:1px;background:#555"></div>
<div class="t" style="left:100px;top:408.8px;width:35px;text-align:right;font:bold 11.5px 'DejaVu Sans',sans-serif;color:#5e5a55;line-height:16px">0.5</div>
<div style="left:137px;top:416px;width:3px;height:1px;background:#555"></div>
<div class="t" style="left:100px;top:432.8px;width:35px;text-align:right;font:11.5px 'DejaVu Sans',sans-serif;color:#5e5a55;line-height:16px">0.4</div>
<div style="left:138px;top:440px;width:2px;height:1px;background:#555"></div>
<div class="t" style="left:100px;top:455.8px;width:35px;text-align:right;font:11.5px 'DejaVu Sans',sans-serif;color:#5e5a55;line-height:16px">0.3</div>
<div style="left:138px;top:463px;width:2px;height:1px;background:#555"></div>
<div class="t" style="left:100px;top:479.8px;width:35px;text-align:right;font:11.5px 'DejaVu Sans',sans-serif;color:#5e5a55;line-height:16px">0.2</div>
<div style="left:138px;top:487px;width:2px;height:1px;background:#555"></div>
<div class="t" style="left:100px;top:502.8px;width:35px;text-align:right;font:11.5px 'DejaVu Sans',sans-serif;color:#5e5a55;line-height:16px">0.1</div>
<div style="left:138px;top:510px;width:2px;height:1px;background:#555"></div>
<div class="t" style="left:100px;top:525.8px;width:35px;text-align:right;font:bold 11.5px 'DejaVu Sans',sans-serif;color:#5e5a55;line-height:16px">0.0</div>
<div style="left:137px;top:533px;width:3px;height:1px;background:#555"></div>
<div class="t" style="left:100px;top:549.8px;width:35px;text-align:right;font:11.5px 'DejaVu Sans',sans-serif;color:#5e5a55;line-height:16px">-0.1</div>
<div style="left:138px;top:557px;width:2px;height:1px;background:#555"></div>
<div class="t" style="left:100px;top:572.8px;width:35px;text-align:right;font:11.5px 'DejaVu Sans',sans-serif;color:#5e5a55;line-height:16px">-0.2</div>
<div style="left:138px;top:580px;width:2px;height:1px;background:#555"></div>
<div class="t" style="left:100px;top:596.8px;width:35px;text-align:right;font:11.5px 'DejaVu Sans',sans-serif;color:#5e5a55;line-height:16px">-0.3</div>
<div style="left:138px;top:604px;width:2px;height:1px;background:#555"></div>
<div class="t" style="left:100px;top:619.8px;width:35px;text-align:right;font:11.5px 'DejaVu Sans',sans-serif;color:#5e5a55;line-height:16px">-0.4</div>
<div style="left:138px;top:627px;width:2px;height:1px;background:#555"></div>
<div class="t" style="left:100px;top:642.8px;width:35px;text-align:right;font:bold 11.5px 'DejaVu Sans',sans-serif;color:#5e5a55;line-height:16px">-0.5</div>
<div style="left:137px;top:650px;width:3px;height:1px;background:#555"></div>
<div class="t" style="left:100px;top:666.8px;width:35px;text-align:right;font:11.5px 'DejaVu Sans',sans-serif;color:#5e5a55;line-height:16px">-0.6</div>
<div style="left:138px;top:674px;width:2px;height:1px;background:#555"></div>
<div class="t" style="left:100px;top:689.8px;width:35px;text-align:right;font:11.5px 'DejaVu Sans',sans-serif;color:#5e5a55;line-height:16px">-0.7</div>
<div style="left:138px;top:697px;width:2px;height:1px;background:#555"></div>
<div class="t" style="left:100px;top:712.8px;width:35px;text-align:right;font:11.5px 'DejaVu Sans',sans-serif;color:#5e5a55;line-height:16px">-0.8</div>
<div style="left:138px;top:720px;width:2px;height:1px;background:#555"></div>
<div style="left:138px;top:744px;width:2px;height:1px;background:#555"></div>
<div class="t" style="left:100px;top:751.8px;width:35px;text-align:right;font:bold 11.5px 'DejaVu Sans',sans-serif;color:#5e5a55;line-height:16px">-1.0</div>
<div style="left:8px;top:774px;width:1697px;height:134px;background:#50505a"></div>
<div style="left:9px;top:908px;width:1696px;height:2px;background:#060606"></div>
<div style="left:9px;top:775px;width:95px;height:133px;background:#f7f7fd"></div>
<div style="left:9px;top:775px;width:17px;height:17px;background:#cdd8ef;box-shadow:inset -1px -1px 0 #8f939f, inset 1px 1px 0 #eef2fc"></div>
<svg style="left:9px;top:775px;" width="17" height="17" viewBox="0 0 17 17"><path d="M5 5l7.5 7.5M12.5 5L5 12.5" stroke="#2e2e2e" stroke-width="1.5"/></svg>
<div style="left:28px;top:775px;width:76px;height:17px;background:#cdd8ef;box-shadow:inset 0 -1px 0 #8f939f, inset 1px 1px 0 #eef2fc"></div>
<div class="t" style="left:30px;top:776px;font-size:9.7px;color:#5e5a55;line-height:17px;width:60px;overflow:hidden">Inside Chara</div>
<svg style="left:89px;top:775px;" width="14" height="17" viewBox="0 0 14 17"><path d="M1.5 5.5h11L7 12z" fill="#4a4a4a"/></svg>
<div style="left:9px;top:793px;width:47px;height:17px;background:#cdd8ef;box-shadow:inset -1px -1px 0 #8f939f, inset 1px 1px 0 #eef2fc"></div>
<div style="left:57px;top:793px;width:47px;height:17px;background:#cdd8ef;box-shadow:inset -1px -1px 0 #8f939f, inset 1px 1px 0 #eef2fc"></div>
<div class="t" style="left:9px;top:794px;width:47px;text-align:center;font-size:9.3px;color:#5e5a55;line-height:16px">Mute</div>
<div class="t" style="left:57px;top:794px;width:47px;text-align:center;font-size:9.3px;color:#5e5a55;line-height:16px">Solo</div>
<div style="left:9px;top:810px;width:95px;height:1px;background:#6e6e78"></div>
<div class="t" style="left:19px;top:816px;font-size:9.5px;color:#5e5a55;line-height:10px">−</div>
<div class="t" style="left:87px;top:815px;font-size:9.5px;color:#5e5a55;line-height:10px">+</div>
<svg style="left:13px;top:819.5px;" width="90" height="20" viewBox="0 0 90 20"><path d="M7.0 11v-3.5M14.6 11v-3.5M22.2 11v-3.5M29.8 11v-3.5M37.4 11v-3.5M45.0 11v-3.5M52.6 11v-3.5M60.2 11v-3.5M67.8 11v-3.5M75.4 11v-3.5M83.0 11v-3.5" stroke="#b4b4b4" stroke-width="1"/><path d="M6 11.5H84" stroke="#8f8f8f" stroke-width="1.6"/><circle cx="44" cy="11.5" r="3.8" fill="#8f8fb0" stroke="#4444e6" stroke-width="2.6"/></svg>
<div class="t" style="left:19px;top:844px;font-size:10px;color:#5e5a55;line-height:11px">L</div>
<div class="t" style="left:86.5px;top:844px;font-size:10px;color:#5e5a55;line-height:11px">R</div>
<svg style="left:13px;top:849.5px;" width="90" height="20" viewBox="0 0 90 20"><path d="M7.0 11v-3.5M14.6 11v-3.5M22.2 11v-3.5M29.8 11v-3.5M37.4 11v-3.5M45.0 11v-3.5M52.6 11v-3.5M60.2 11v-3.5M67.8 11v-3.5M75.4 11v-3.5M83.0 11v-3.5" stroke="#b4b4b4" stroke-width="1"/><path d="M6 11.5H84" stroke="#8f8f8f" stroke-width="1.6"/><circle cx="44" cy="11.5" r="3.8" fill="#8f8fb0" stroke="#4444e6" stroke-width="2.6"/></svg>
<div class="t" style="left:12.5px;top:874px;font-size:9.4px;color:#5e5a55;line-height:12px">Mono, 48000Hz</div>
<div style="left:9px;top:891px;width:77px;height:17px;background:#cdd8ef;box-shadow:inset -1px 0 0 #8f939f, inset 0 1px 0 #eef2fc"></div>
<svg style="left:9px;top:891px;" width="77" height="17" viewBox="0 0 77 17"><path d="M32.5 12.5h11l-5.5-6z" fill="#4a4a4a"/></svg>
<div style="left:104px;top:775px;width:1px;height:133px;background:#3c3c44"></div>
<div style="left:105px;top:775px;width:35px;height:133px;background:#f7f7fd"></div>
<div style="left:140px;top:775px;width:1px;height:133px;background:#7d7d7d"></div>
<div class="t" style="left:100px;top:775.8px;width:35px;text-align:right;font:bold 11.5px 'DejaVu Sans',sans-serif;color:#5e5a55;line-height:16px">1.0</div>
<div class="t" style="left:100px;top:801.8px;width:35px;text-align:right;font:11.5px 'DejaVu Sans',sans-serif;color:#5e5a55;line-height:16px">0.5</div>
<div style="left:138px;top:809px;width:2px;height:1px;background:#555"></div>
<div class="t" style="left:100px;top:833.8px;width:35px;text-align:right;font:bold 11.5px 'DejaVu Sans',sans-serif;color:#5e5a55;line-height:16px">0.0</div>
<div style="left:137px;top:841px;width:3px;height:1px;background:#555"></div>
<div class="t" style="left:100px;top:867.8px;width:35px;text-align:right;font:11.5px 'DejaVu Sans',sans-serif;color:#5e5a55;line-height:16px">-0.5</div>
<div style="left:138px;top:875px;width:2px;height:1px;background:#555"></div>
<div class="t" style="left:100px;top:892.8px;width:35px;text-align:right;font:bold 11.5px 'DejaVu Sans',sans-serif;color:#5e5a55;line-height:16px">-1.0</div>
<div style="left:8px;top:914px;width:1697px;height:147px;background:#50505a"></div>
<div style="left:9px;top:915px;width:95px;height:146px;background:#f7f7fd"></div>
<div style="left:9px;top:915px;width:17px;height:17px;background:#cdd8ef;box-shadow:inset -1px -1px 0 #8f939f, inset 1px 1px 0 #eef2fc"></div>
<svg style="left:9px;top:915px;" width="17" height="17" viewBox="0 0 17 17"><path d="M5 5l7.5 7.5M12.5 5L5 12.5" stroke="#2e2e2e" stroke-width="1.5"/></svg>
<div style="left:28px;top:915px;width:76px;height:17px;background:#cdd8ef;box-shadow:inset 0 -1px 0 #8f939f, inset 1px 1px 0 #eef2fc"></div>
<div class="t" style="left:30px;top:916px;font-size:9.7px;color:#5e5a55;line-height:17px;width:60px;overflow:hidden">I-Thru</div>
<svg style="left:89px;top:915px;" width="14" height="17" viewBox="0 0 14 17"><path d="M1.5 5.5h11L7 12z" fill="#4a4a4a"/></svg>
<div style="left:9px;top:933px;width:47px;height:17px;background:#cdd8ef;box-shadow:inset -1px -1px 0 #8f939f, inset 1px 1px 0 #eef2fc"></div>
<div style="left:57px;top:933px;width:47px;height:17px;background:#cdd8ef;box-shadow:inset -1px -1px 0 #8f939f, inset 1px 1px 0 #eef2fc"></div>
<div class="t" style="left:9px;top:934px;width:47px;text-align:center;font-size:9.3px;color:#5e5a55;line-height:16px">Mute</div>
<div class="t" style="left:57px;top:934px;width:47px;text-align:center;font-size:9.3px;color:#5e5a55;line-height:16px">Solo</div>
<div style="left:9px;top:950px;width:95px;height:1px;background:#6e6e78"></div>
<div class="t" style="left:19px;top:956px;font-size:9.5px;color:#5e5a55;line-height:10px">−</div>
<div class="t" style="left:87px;top:955px;font-size:9.5px;color:#5e5a55;line-height:10px">+</div>
<svg style="left:13px;top:959.5px;" width="90" height="20" viewBox="0 0 90 20"><path d="M7.0 11v-3.5M14.6 11v-3.5M22.2 11v-3.5M29.8 11v-3.5M37.4 11v-3.5M45.0 11v-3.5M52.6 11v-3.5M60.2 11v-3.5M67.8 11v-3.5M75.4 11v-3.5M83.0 11v-3.5" stroke="#b4b4b4" stroke-width="1"/><path d="M6 11.5H84" stroke="#8f8f8f" stroke-width="1.6"/><circle cx="44" cy="11.5" r="3.8" fill="#8f8fb0" stroke="#4444e6" stroke-width="2.6"/></svg>
<div class="t" style="left:19px;top:984px;font-size:10px;color:#5e5a55;line-height:11px">L</div>
<div class="t" style="left:86.5px;top:984px;font-size:10px;color:#5e5a55;line-height:11px">R</div>
<svg style="left:13px;top:989.5px;" width="90" height="20" viewBox="0 0 90 20"><path d="M7.0 11v-3.5M14.6 11v-3.5M22.2 11v-3.5M29.8 11v-3.5M37.4 11v-3.5M45.0 11v-3.5M52.6 11v-3.5M60.2 11v-3.5M67.8 11v-3.5M75.4 11v-3.5M83.0 11v-3.5" stroke="#b4b4b4" stroke-width="1"/><path d="M6 11.5H84" stroke="#8f8f8f" stroke-width="1.6"/><circle cx="44" cy="11.5" r="3.8" fill="#8f8fb0" stroke="#4444e6" stroke-width="2.6"/></svg>
<div class="t" style="left:12.5px;top:1014px;font-size:9.4px;color:#5e5a55;line-height:12px">Mono, 48000Hz</div>
<div class="t" style="left:12.5px;top:1026px;font-size:9.4px;color:#5e5a55;line-height:12px">32-bit float</div>
<div style="left:9px;top:1044px;width:77px;height:16px;background:#cdd8ef;box-shadow:inset -1px 0 0 #8f939f, inset 0 1px 0 #eef2fc"></div>
<svg style="left:9px;top:1044px;" width="77" height="17" viewBox="0 0 77 17"><path d="M32.5 12.5h11l-5.5-6z" fill="#4a4a4a"/></svg>
<div style="left:104px;top:915px;width:1px;height:146px;background:#3c3c44"></div>
<div style="left:105px;top:915px;width:35px;height:146px;background:#f7f7fd"></div>
<div style="left:140px;top:915px;width:1px;height:146px;background:#7d7d7d"></div>
<div class="t" style="left:100px;top:915.8px;width:35px;text-align:right;font:bold 11.5px 'DejaVu Sans',sans-serif;color:#5e5a55;line-height:16px">1.0</div>
<div class="t" style="left:100px;top:943.8px;width:35px;text-align:right;font:11.5px 'DejaVu Sans',sans-serif;color:#5e5a55;line-height:16px">0.5</div>
<div style="left:138px;top:951px;width:2px;height:1px;background:#555"></div>
<div class="t" style="left:100px;top:980.8px;width:35px;text-align:right;font:bold 11.5px 'DejaVu Sans',sans-serif;color:#5e5a55;line-height:16px">0.0</div>
<div style="left:137px;top:988px;width:3px;height:1px;background:#555"></div>
<div class="t" style="left:100px;top:1016.8px;width:35px;text-align:right;font:11.5px 'DejaVu Sans',sans-serif;color:#5e5a55;line-height:16px">-0.5</div>
<div style="left:138px;top:1024px;width:2px;height:1px;background:#555"></div>
<div class="t" style="left:100px;top:1044.8px;width:35px;text-align:right;font:bold 11.5px 'DejaVu Sans',sans-serif;color:#5e5a55;line-height:16px">-1.0</div>
<svg style="left:0;top:0" width="1705" height="1060" viewBox="0 0 1705 1060"><rect x="141" y="175" width="1564" height="117" fill="#d6d6d6"/><rect x="141" y="175" width="47" height="117" fill="#e9f0fc"/><rect x="397" y="175" width="33" height="117" fill="#e9f0fc"/><rect x="527" y="175" width="40" height="117" fill="#e9f0fc"/><rect x="586" y="175" width="27" height="117" fill="#e9f0fc"/><path d="M141 233.5H1705" stroke="#3232c8" stroke-width="1.2"/><path d="M142.5 232.8V234.5M143.5 232.7V234.6M144.5 232.4V234.0M145.5 233.0V234.9M146.5 232.8V234.2M147.5 231.9V234.4M148.5 232.1V234.4M149.5 232.4V234.1M150.5 232.4V234.9M151.5 232.5V234.8M152.5 232.3V234.0M153.5 232.2V234.6M154.5 232.8V234.0M155.5 232.1V234.4M156.5 232.3V234.9M157.5 232.3V235.0M158.5 232.7V234.8M159.5 232.6V235.0M165.5 232.0V234.1M166.5 232.9V234.2M167.5 231.9V234.4M168.5 232.3V234.3M169.5 232.5V234.4M170.5 232.7V234.6M171.5 232.4V235.1M172.5 232.3V235.1M173.5 232.0V235.2M174.5 232.3V234.1M175.5 232.0V235.1M176.5 231.9V234.6M177.5 232.2V234.2M178.5 232.0V234.6M179.5 232.7V234.0M180.5 232.0V235.2M181.5 232.9V234.9M182.5 232.6V234.1M183.5 232.7V234.9M184.5 232.0V234.0M185.5 232.3V234.0M400.5 232.3V234.3M401.5 232.1V235.1M402.5 232.5V235.1M405.5 232.8V234.0M406.5 232.4V234.0M407.5 232.9V234.3M410.5 232.4V234.1M411.5 233.0V234.9M412.5 232.8V235.0M415.5 232.0V234.3M416.5 232.6V234.5M417.5 232.4V234.6M420.5 232.5V234.6M421.5 232.0V234.5M422.5 232.6V234.7M425.5 232.8V234.2M426.5 231.9V234.5M427.5 232.5V234.0M528.5 232.6V234.6M532.5 233.0V234.7M533.5 232.3V234.0M534.5 232.3V234.5M535.5 232.3V234.3M539.5 232.2V234.8M540.5 233.0V234.0M541.5 232.3V235.1M542.5 232.8V234.5M546.5 232.4V234.3M547.5 232.7V234.3M548.5 232.6V234.6M549.5 232.7V234.4M553.5 232.1V234.0M554.5 232.4V234.8M555.5 232.7V234.2M556.5 232.1V234.2M560.5 232.8V234.4M561.5 232.2V234.1M562.5 232.7V234.3M563.5 232.0V234.4M596.5 232.2V234.1M597.5 232.8V234.6M600.5 232.1V234.3M601.5 232.9V234.0M604.5 232.6V234.1M605.5 232.2V234.8M608.5 232.9V234.2M609.5 232.2V234.6" stroke="#3232c8" stroke-width="1"/><path d="" stroke="#6c6cdc" stroke-width="1"/><rect x="141" y="299" width="1564" height="469" fill="#d6d6d6"/><polygon points="191.5,533.0 193,298.5 198.7,298.5 200,302.8 202,309.2 204,315.4 206,321.5 208,327.4 210,333.2 212,338.7 214,344.2 216,349.4 218,354.6 220,359.5 222,364.4 224,369.1 226,373.7 228,378.1 230,382.4 232,386.6 234,390.7 236,394.7 238,398.6 240,402.3 242,406.0 244,409.5 246,413.0 248,416.3 250,419.6 252,422.7 253.8,425.5 258,427.0 264,429.2 270,431.3 276,433.3 282,435.4 288,437.3 294,439.3 300,441.2 306,443.0 312,444.9 318,446.7 324,448.4 330,450.1 336,451.8 342,453.4 348,455.1 354,456.6 360,458.2 366,459.7 372,461.2 378,462.6 384,464.1 390,465.5 396.7,467.0 398.2,533.0 398.2,533.0 396.7,599.0 390,600.5 384,601.9 378,603.4 372,604.8 366,606.3 360,607.8 354,609.4 348,610.9 342,612.6 336,614.2 330,615.9 324,617.6 318,619.3 312,621.1 306,623.0 300,624.8 294,626.7 288,628.7 282,630.6 276,632.7 270,634.7 264,636.8 258,639.0 253.8,640.5 252,643.3 250,646.4 248,649.7 246,653.0 244,656.5 242,660.0 240,663.7 238,667.4 236,671.3 234,675.3 232,679.4 230,683.6 228,687.9 226,692.3 224,696.9 222,701.6 220,706.5 218,711.4 216,716.6 214,721.8 212,727.3 210,732.8 208,738.6 206,744.5 204,750.6 202,756.8 200,763.2 198.7,767.5 193,767.5 191.5,533.0" fill="#c0c0c0"/><polygon points="434,468 522,464 523,533 522,602.5 434,598.5 433,533" fill="#c0c0c0"/><polygon points="568,457 587,459 587,607 568,609.5" fill="#c0c0c0"/><path d="M141 533.5H1600" stroke="#3232c8" stroke-width="1.1"/><path d="M192.5 530.6V536.8M193.5 530.0V537.5M194.5 530.2V537.4M195.5 532.2V535.9M196.5 529.5V536.5M197.5 529.7V535.0M198.5 531.1V535.3M199.5 530.9V536.2M200.5 532.2V535.2M201.5 531.6V537.4M202.5 530.1V535.1M203.5 530.0V535.0M204.5 530.6V535.0M205.5 532.2V537.2M206.5 531.8V535.2M207.5 529.4V537.2M208.5 532.1V536.6M209.5 531.5V535.8M210.5 532.2V536.5M211.5 531.1V536.6M212.5 530.6V535.0M213.5 531.9V534.7M214.5 532.3V534.5M215.5 532.0V535.7M216.5 532.5V535.8M217.5 532.0V535.0M218.5 530.8V535.4M219.5 532.0V535.4M220.5 531.1V534.5M221.5 530.4V534.5M222.5 531.5V535.8M223.5 532.7V535.6M225.5 532.2V535.2M226.5 532.7V534.3M227.5 532.5V536.0M229.5 532.5V535.6M230.5 531.1V536.0M231.5 532.2V534.8M233.5 531.9V535.6M234.5 532.6V535.5M235.5 531.3V535.8M237.5 532.7V536.0M238.5 532.6V534.8M239.5 531.7V535.9M241.5 532.2V535.9M242.5 531.9V534.7M243.5 532.3V534.5M245.5 532.6V534.4M246.5 531.6V536.1M247.5 532.5V534.3M249.5 530.9V535.1" stroke="#3232c8" stroke-width="1"/><path d="M192.5 532.2V534.8M193.5 531.9V535.1M194.5 532.0V535.0M196.5 532.2V534.8M199.5 532.3V534.7M201.5 532.7V534.3M207.5 531.8V535.2M209.5 532.6V534.4M211.5 532.4V534.6M218.5 532.7V534.3M222.5 532.6V534.4M230.5 532.4V534.6M235.5 532.5V534.5M246.5 532.6V534.4" stroke="#6c6cdc" stroke-width="1"/><rect x="192" y="531.3" width="30" height="4.4" fill="#3232c8"/><rect x="222" y="532.0" width="13" height="3.0" fill="#3232c8"/><rect x="236" y="532.0" width="4" height="3.0" fill="#3232c8"/><rect x="241" y="532.0" width="4" height="3.0" fill="#3232c8"/><rect x="246" y="532.0" width="4" height="3.0" fill="#3232c8"/><rect x="250" y="532.0" width="10" height="3.0" fill="#3232c8"/><rect x="262" y="532.0" width="3" height="3.0" fill="#3232c8"/><rect x="266" y="532.0" width="18" height="3.0" fill="#3232c8"/><rect x="286" y="532.0" width="3" height="3.0" fill="#3232c8"/><rect x="290" y="532.0" width="10" height="3.0" fill="#3232c8"/><rect x="301" y="532.0" width="85" height="3.0" fill="#3232c8"/><rect x="388" y="532.0" width="3" height="3.0" fill="#3232c8"/><rect x="393" y="532.0" width="2" height="3.0" fill="#3232c8"/><rect x="396" y="532.0" width="0" height="3.0" fill="#3232c8"/><rect x="434" y="532.1" width="5" height="2.8" fill="#3232c8"/><rect x="441" y="532.1" width="5" height="2.8" fill="#3232c8"/><rect x="448" y="532.1" width="18" height="2.8" fill="#3232c8"/><rect x="467" y="532.1" width="15" height="2.8" fill="#3232c8"/><rect x="483" y="532.1" width="16" height="2.8" fill="#3232c8"/><rect x="500" y="532.1" width="18" height="2.8" fill="#3232c8"/><rect x="519" y="532.1" width="3" height="2.8" fill="#3232c8"/><rect x="568" y="532.1" width="6" height="2.8" fill="#3232c8"/><rect x="576" y="532.1" width="11" height="2.8" fill="#3232c8"/><rect x="141" y="775" width="1564" height="133" fill="#d6d6d6"/><rect x="401" y="775" width="27" height="133" fill="#c0c0c0"/><rect x="401" y="775" width="1" height="133" fill="#8a8a8a"/><rect x="427" y="775" width="1" height="133" fill="#8a8a8a"/><rect x="526" y="775" width="41" height="133" fill="#c0c0c0"/><rect x="526" y="775" width="1" height="133" fill="#8a8a8a"/><rect x="566" y="775" width="1" height="133" fill="#8a8a8a"/><rect x="581" y="775" width="59" height="133" fill="#c0c0c0"/><rect x="581" y="775" width="1" height="133" fill="#8a8a8a"/><rect x="639" y="775" width="1" height="133" fill="#8a8a8a"/><path d="M401 841.5H427" stroke="#3232c8" stroke-width="1"/><path d="M526 841.5H566" stroke="#3232c8" stroke-width="1"/><path d="M581 841.5H620" stroke="#3232c8" stroke-width="1"/><path d="M406.5 839.4V844.2M407.5 833.1V847.2M410.5 837.3V847.2M411.5 826.5V859.5M412.5 834.6V855.4M413.5 824.5V868.5M414.5 821.0V871.5M415.5 822.5V875.5M416.5 831.1V862.1M417.5 836.5V852.9M418.5 840.2V845.9M419.5 834.8V845.6M420.5 832.6V854.1M421.5 840.2V842.8M422.5 840.2V842.6M423.5 839.3V842.6M527.5 839.8V844.4M528.5 827.5V861.5M529.5 839.9V846.0M530.5 834.3V859.7M531.5 833.6V856.2M532.5 833.8V856.6M533.5 822.5V868.5M534.5 827.5V865.5M535.5 835.3V849.0M587.5 825.5V865.5M588.5 825.5V865.5M589.5 826.5V863.5M590.5 825.5V866.4M591.5 837.3V846.2M592.5 835.9V848.1M593.5 836.1V846.7M594.5 831.9V849.9M595.5 831.1V849.7M596.5 836.5V847.5M597.5 837.7V848.5M598.5 829.5V851.8M599.5 828.7V850.9M600.5 837.3V854.0M601.5 830.9V849.3M602.5 837.2V850.1M603.5 828.5V860.5M604.5 839.5V843.1M605.5 840.1V843.2M606.5 840.1V842.8M610.5 832.6V844.8M611.5 823.0V854.3M612.5 830.2V859.3" stroke="#3232c8" stroke-width="1"/><path d="M406.5 840.5V842.5M407.5 838.9V844.1M410.5 839.6V843.4M411.5 834.8V848.2M412.5 838.4V844.6M413.5 833.9V849.1M414.5 832.3V850.7M415.5 833.0V850.0M416.5 836.8V846.2M417.5 839.2V843.8M419.5 839.7V843.3M420.5 837.5V845.5M528.5 835.2V847.8M530.5 838.3V844.7M531.5 837.9V845.1M532.5 838.0V845.0M533.5 833.0V850.0M534.5 835.2V847.8M535.5 838.7V844.3M587.5 834.3V848.7M588.5 834.3V848.7M589.5 834.8V848.2M590.5 834.3V848.7M591.5 839.6V843.4M592.5 839.0V844.0M593.5 839.2V843.8M594.5 837.7V845.3M595.5 837.8V845.2M596.5 839.2V843.8M597.5 839.8V843.2M598.5 836.9V846.1M599.5 837.3V845.7M600.5 839.6V843.4M601.5 838.0V845.0M602.5 839.6V843.4M603.5 835.6V847.4M610.5 840.0V843.0M611.5 835.7V847.3M612.5 836.4V846.6" stroke="#6c6cdc" stroke-width="1"/><rect x="141" y="915" width="1564" height="146" fill="#d6d6d6"/><rect x="187" y="915" width="216" height="146" fill="#c0c0c0"/><rect x="187" y="915" width="1" height="146" fill="#8a8a8a"/><rect x="402" y="915" width="1" height="146" fill="#8a8a8a"/><rect x="424" y="915" width="104" height="146" fill="#c0c0c0"/><rect x="424" y="915" width="1" height="146" fill="#8a8a8a"/><rect x="527" y="915" width="1" height="146" fill="#8a8a8a"/><rect x="565" y="915" width="21" height="146" fill="#c0c0c0"/><rect x="565" y="915" width="1" height="146" fill="#8a8a8a"/><rect x="585" y="915" width="1" height="146" fill="#8a8a8a"/><rect x="677" y="915" width="55" height="146" fill="#c0c0c0"/><rect x="677" y="915" width="1" height="146" fill="#8a8a8a"/><rect x="731" y="915" width="1" height="146" fill="#8a8a8a"/><rect x="1201" y="915" width="46" height="146" fill="#c0c0c0"/><rect x="1201" y="915" width="1" height="146" fill="#8a8a8a"/><rect x="1246" y="915" width="1" height="146" fill="#8a8a8a"/><rect x="1280" y="915" width="44" height="146" fill="#c0c0c0"/><rect x="1280" y="915" width="1" height="146" fill="#8a8a8a"/><rect x="1323" y="915" width="1" height="146" fill="#8a8a8a"/><rect x="1373" y="915" width="75" height="146" fill="#c0c0c0"/><rect x="1373" y="915" width="1" height="146" fill="#8a8a8a"/><rect x="1447" y="915" width="1" height="146" fill="#8a8a8a"/><rect x="1477" y="915" width="19" height="146" fill="#c0c0c0"/><rect x="1477" y="915" width="1" height="146" fill="#8a8a8a"/><rect x="1495" y="915" width="1" height="146" fill="#8a8a8a"/><path d="M187 988.5H403" stroke="#3232c8" stroke-width="1"/><path d="M424 988.5H528" stroke="#3232c8" stroke-width="1"/><path d="M565 988.5H586" stroke="#3232c8" stroke-width="1"/><path d="M677 988.5H732" stroke="#3232c8" stroke-width="1"/><path d="M1201 988.5H1247" stroke="#3232c8" stroke-width="1"/><path d="M1280 988.5H1324" stroke="#3232c8" stroke-width="1"/><path d="M1373 988.5H1448" stroke="#3232c8" stroke-width="1"/><path d="M1477 988.5H1496" stroke="#3232c8" stroke-width="1"/><path d="M189.5 986.2V993.1M190.5 982.7V993.3M191.5 984.3V997.1M192.5 978.0V996.0M193.5 979.8V994.6M194.5 983.7V996.5M195.5 972.5V1001.5M196.5 978.0V993.7M197.5 975.3V995.1M198.5 981.9V993.5M199.5 972.5V1001.0M200.5 974.2V999.4M201.5 983.5V996.1M202.5 979.0V994.1M203.5 973.2V996.5M204.5 982.6V1002.0M205.5 982.9V1003.5M206.5 979.5V998.6M207.5 980.8V997.8M208.5 969.5V1010.5M209.5 974.5V1006.5M210.5 982.3V993.5M211.5 974.3V995.1M212.5 975.5V994.9M213.5 972.9V1003.0M214.5 975.8V1001.3M215.5 978.0V1000.9M216.5 982.9V997.7M217.5 974.9V994.8M218.5 973.6V1002.9M219.5 971.5V1005.5M220.5 980.0V996.5M221.5 980.3V996.0M222.5 976.1V994.9M223.5 985.3V992.0M224.5 982.1V996.8M228.5 985.6V991.6M229.5 984.7V993.6M230.5 985.5V993.8M231.5 983.1V994.8M232.5 984.8V992.5M233.5 983.2V999.6M234.5 982.7V997.2M235.5 983.0V992.9M236.5 984.6V999.4M237.5 978.8V995.1M238.5 979.7V998.0M239.5 977.5V1001.0M240.5 982.2V1001.4M241.5 976.9V997.1M242.5 977.7V996.1M243.5 982.4V994.0M244.5 977.8V993.3M245.5 984.6V999.3M246.5 978.8V996.1M247.5 978.2V992.6M248.5 983.4V994.3M249.5 982.1V993.4M250.5 984.6V994.7M251.5 977.5V1001.3M252.5 979.1V996.0M253.5 983.4V1001.0M254.5 981.1V998.5M255.5 984.8V993.7M256.5 978.2V999.2M257.5 977.7V997.2M258.5 982.0V997.0M259.5 978.1V994.5M260.5 981.1V994.2M261.5 978.9V992.4M262.5 979.7V1001.0M263.5 984.8V997.1M264.5 968.5V1007.5M265.5 973.5V1008.5M266.5 980.1V999.8M267.5 980.6V994.1M268.5 972.5V1006.5M269.5 983.4V998.7M270.5 980.7V991.8M271.5 986.0V991.1M272.5 986.6V992.1M273.5 987.8V990.3M274.5 985.6V989.9M275.5 986.0V990.4M276.5 986.1V990.1M277.5 987.0V990.0M278.5 986.5V991.5M279.5 969.5V1012.5M280.5 981.8V992.1M281.5 977.9V1001.9M282.5 977.2V1000.8M283.5 984.3V997.0M284.5 984.0V1000.5M285.5 963.5V1010.5M286.5 970.5V1011.5M287.5 983.2V999.9M288.5 982.5V999.7M289.5 982.0V993.2M290.5 973.5V1004.5M291.5 983.1V993.7M292.5 986.0V989.7M293.5 984.9V992.3M294.5 982.8V990.5M295.5 984.5V992.1M296.5 983.8V994.3M297.5 986.6V991.9M298.5 974.5V1005.5M299.5 982.4V995.5M300.5 985.3V997.8M301.5 978.7V993.9M302.5 983.8V999.4M303.5 985.1V992.1M304.5 985.2V997.8M305.5 980.5V994.6M306.5 982.6V991.4M307.5 987.1V989.6M308.5 986.1V990.6M309.5 986.4V990.1M310.5 966.5V1006.5M311.5 986.0V993.0M312.5 984.4V996.2M313.5 968.5V1014.5M314.5 977.1V999.5M315.5 980.1V995.1M316.5 980.8V997.9M317.5 978.1V1004.0M318.5 983.5V997.8M319.5 979.7V1000.7M320.5 971.5V1002.5M321.5 974.9V1001.5M322.5 978.1V1001.2M323.5 977.7V1002.6M324.5 977.3V1000.3M325.5 982.2V1003.3M326.5 980.8V999.4M327.5 975.7V1004.0M328.5 973.6V993.3M329.5 969.5V1008.5M330.5 981.5V995.9M331.5 980.8V994.3M332.5 979.0V993.8M333.5 981.6V1003.7M334.5 956.5V1018.5M335.5 964.5V1012.5M336.5 976.8V997.6M337.5 983.3V1003.9M338.5 977.2V994.9M339.5 963.5V1008.5M340.5 970.5V1009.5M341.5 981.3V999.7M342.5 977.5V995.4M343.5 975.5V998.5M344.5 977.4V994.3M345.5 984.4V997.4M346.5 985.6V994.6M347.5 987.7V989.9M348.5 986.7V990.5M349.5 984.7V990.8M350.5 986.3V991.2M351.5 986.7V990.0M352.5 986.5V990.3M461.5 987.2V993.5M462.5 986.0V999.4M463.5 980.5V1000.5M464.5 982.5V1000.5M465.5 981.0V998.3M466.5 987.9V989.9M467.5 987.3V991.9M468.5 985.5V990.6M469.5 987.3V991.6M470.5 987.2V990.6M471.5 973.5V999.5M472.5 984.3V996.7M473.5 984.0V992.4M474.5 981.1V997.8M475.5 983.0V992.0M476.5 985.0V994.3M477.5 982.8V993.0M478.5 974.5V1003.5M479.5 981.0V998.0M480.5 980.1V998.4M481.5 985.8V995.7M482.5 985.5V998.5M483.5 981.4V997.3M484.5 985.0V992.0M485.5 980.9V995.9M486.5 982.3V994.8M487.5 981.0V993.8M488.5 984.6V993.9M489.5 984.4V996.1M490.5 981.8V991.4M491.5 986.7V992.6M492.5 987.3V989.2M493.5 987.2V989.5M678.5 986.9V991.8M679.5 982.7V994.5M680.5 984.6V992.4M681.5 976.3V997.2M682.5 981.6V998.9M683.5 978.5V997.1M684.5 984.2V1000.4M685.5 983.3V992.9M686.5 982.1V997.2M687.5 979.5V993.8M688.5 978.7V996.8M689.5 973.5V1005.5M690.5 983.7V1000.7M691.5 977.6V1001.4M692.5 979.0V994.2M693.5 978.0V1001.3M694.5 980.5V1001.4M695.5 975.8V995.7M696.5 976.2V1001.7M697.5 977.8V992.7M698.5 983.3V996.3M699.5 983.1V995.2M700.5 986.3V989.7M701.5 981.9V992.8M702.5 982.2V991.3M703.5 981.5V992.9M704.5 984.0V993.4M705.5 981.1V993.2M706.5 984.9V995.1M707.5 983.3V998.2M708.5 969.5V1004.5M709.5 976.7V996.4M710.5 983.5V993.4M711.5 981.0V999.0M712.5 966.5V1008.5M713.5 973.5V1010.5M714.5 984.2V1000.0M715.5 982.9V994.0M716.5 975.4V998.3M717.5 970.5V1003.5M718.5 975.8V998.2M719.5 983.6V995.2M720.5 980.9V999.7M721.5 977.2V1001.1M722.5 972.5V1004.5M723.5 978.6V995.3M724.5 980.9V996.6M725.5 980.5V995.3M726.5 981.7V995.6M727.5 985.9V996.5M728.5 986.7V990.8M729.5 983.8V993.1M730.5 982.5V991.5M731.5 985.4V990.3M1311.5 985.0V992.4M1312.5 982.1V1000.7M1313.5 983.8V994.6M1314.5 968.5V1002.5M1315.5 971.5V1005.5M1316.5 975.5V1005.5M1317.5 979.2V1001.1M1318.5 981.5V993.3M1319.5 982.5V1001.3M1320.5 981.4V997.0M1321.5 983.4V997.0M1480.5 986.0V991.8M1481.5 980.5V997.2M1482.5 984.0V993.2M1483.5 982.3V995.7M1484.5 971.4V996.7M1485.5 959.5V1014.5M1486.5 963.5V1018.5M1487.5 966.5V1014.5M1488.5 971.1V1009.3M1489.5 981.9V999.1M1490.5 974.6V996.9M1491.5 972.9V997.6M1492.5 985.7V990.2M1493.5 984.9V992.1M1494.5 983.2V995.3" stroke="#3232c8" stroke-width="1"/><path d="M189.5 987.4V989.6M190.5 986.3V990.7M191.5 986.6V990.4M192.5 985.1V991.9M193.5 985.8V991.2M194.5 986.3V990.7M195.5 982.6V994.4M196.5 986.2V990.8M197.5 985.5V991.5M198.5 986.2V990.8M199.5 982.9V994.1M200.5 983.6V993.4M201.5 986.3V990.7M202.5 986.0V991.0M203.5 984.9V992.1M204.5 985.9V991.1M205.5 986.0V991.0M206.5 984.5V992.5M207.5 985.0V992.0M208.5 980.0V997.0M209.5 982.2V994.8M210.5 986.3V990.7M211.5 985.5V991.5M212.5 985.6V991.4M213.5 982.0V995.0M214.5 982.8V994.2M215.5 983.8V993.2M216.5 986.0V991.0M217.5 985.7V991.3M218.5 982.0V995.0M219.5 980.9V996.1M220.5 984.9V992.1M221.5 985.1V991.9M222.5 985.6V991.4M223.5 987.1V989.9M224.5 985.6V991.4M228.5 987.2V989.8M229.5 986.8V990.2M230.5 987.2V989.8M231.5 986.1V990.9M232.5 986.8V990.2M233.5 986.1V990.9M234.5 985.9V991.1M235.5 986.5V990.5M236.5 986.8V990.2M237.5 985.5V991.5M238.5 984.5V992.5M239.5 983.6V993.4M240.5 985.7V991.3M241.5 984.6V992.4M242.5 985.1V991.9M243.5 986.0V991.0M244.5 986.3V990.7M245.5 986.7V990.3M246.5 985.1V991.9M247.5 986.6V990.4M248.5 986.2V990.8M249.5 986.3V990.7M250.5 986.7V990.3M251.5 983.6V993.4M252.5 985.1V991.9M253.5 986.2V990.8M254.5 985.2V991.8M255.5 986.8V990.2M256.5 983.8V993.2M257.5 984.6V992.4M258.5 985.6V991.4M259.5 985.8V991.2M260.5 985.9V991.1M261.5 986.7V990.3M262.5 984.5V992.5M263.5 986.8V990.2M264.5 980.0V997.0M265.5 981.8V995.2M266.5 984.7V992.3M267.5 986.0V991.0M268.5 981.3V995.7M269.5 986.2V990.8M270.5 987.0V990.0M271.5 987.4V989.6M272.5 987.7V989.3M275.5 987.7V989.3M278.5 987.6V989.4M279.5 980.0V997.0M280.5 986.9V990.1M281.5 983.7V993.3M282.5 983.4V993.6M283.5 986.6V990.4M284.5 986.5V990.5M285.5 978.6V998.4M286.5 980.4V996.6M287.5 986.1V990.9M288.5 985.8V991.2M289.5 986.4V990.6M290.5 981.8V995.2M291.5 986.2V990.8M293.5 986.9V990.1M294.5 987.6V989.4M295.5 986.9V990.1M296.5 986.4V990.6M297.5 987.6V989.4M298.5 982.2V994.8M299.5 985.7V991.3M300.5 987.0V990.0M301.5 986.1V990.9M302.5 986.4V990.6M303.5 987.0V990.0M304.5 987.0V990.0M305.5 985.7V991.3M306.5 987.2V989.8M308.5 987.6V989.4M310.5 980.4V996.6M311.5 987.4V989.6M312.5 986.7V990.3M313.5 979.5V997.5M314.5 983.5V993.5M315.5 985.5V991.5M316.5 985.0V992.0M317.5 983.8V993.2M318.5 986.3V990.7M319.5 984.5V992.5M320.5 982.2V994.8M321.5 982.6V994.4M322.5 983.8V993.2M323.5 983.6V993.4M324.5 983.5V993.5M325.5 985.7V991.3M326.5 985.0V992.0M327.5 982.8V994.2M328.5 986.3V990.7M329.5 980.0V997.0M330.5 985.4V991.6M331.5 985.9V991.1M332.5 986.1V990.9M333.5 985.4V991.6M334.5 975.0V1002.0M335.5 977.7V999.3M336.5 984.4V992.6M337.5 986.2V990.8M338.5 985.6V991.4M339.5 979.5V997.5M340.5 980.4V996.6M341.5 985.3V991.7M342.5 985.4V991.6M343.5 984.0V993.0M344.5 985.9V991.1M345.5 986.6V990.4M346.5 987.2V989.8M349.5 987.5V989.5M350.5 987.5V989.5M462.5 987.4V989.6M463.5 984.9V992.1M464.5 985.8V991.2M465.5 985.1V991.9M468.5 987.6V989.4M471.5 983.5V993.5M472.5 986.6V990.4M473.5 986.7V990.3M474.5 985.2V991.8M475.5 986.9V990.1M476.5 986.9V990.1M477.5 986.5V990.5M478.5 982.2V994.8M479.5 985.1V991.9M480.5 984.7V992.3M481.5 987.3V989.7M482.5 987.2V989.8M483.5 985.3V991.7M484.5 986.9V990.1M485.5 985.2V991.8M486.5 985.7V991.3M487.5 986.1V990.9M488.5 986.7V990.3M489.5 986.7V990.3M490.5 987.2V989.8M491.5 987.7V989.3M679.5 985.9V991.1M680.5 986.7V990.3M681.5 984.6V992.4M682.5 985.4V991.6M683.5 984.6V992.4M684.5 986.6V990.4M685.5 986.5V990.5M686.5 985.6V991.4M687.5 986.1V990.9M688.5 984.8V992.2M689.5 981.8V995.2M690.5 986.3V990.7M691.5 983.6V993.4M692.5 986.0V991.0M693.5 983.8V993.2M694.5 984.9V992.1M695.5 985.3V991.7M696.5 982.9V994.1M697.5 986.6V990.4M698.5 986.2V990.8M699.5 986.1V990.9M701.5 986.5V990.5M702.5 987.2V989.8M703.5 986.5V990.5M704.5 986.5V990.5M705.5 986.4V990.6M706.5 986.9V990.1M707.5 986.2V990.8M708.5 981.3V995.7M709.5 984.9V992.1M710.5 986.3V990.7M711.5 985.1V991.9M712.5 979.5V997.5M713.5 981.8V995.2M714.5 986.6V990.4M715.5 986.0V991.0M716.5 984.1V992.9M717.5 981.8V995.2M718.5 984.1V992.9M719.5 986.3V990.7M720.5 985.1V991.9M721.5 983.4V993.6M722.5 981.3V995.7M723.5 985.4V991.6M724.5 985.1V991.9M725.5 985.5V991.5M726.5 985.4V991.6M727.5 987.3V989.7M728.5 987.7V989.3M729.5 986.4V990.6M730.5 987.1V989.9M731.5 987.7V989.3M1311.5 986.9V990.1M1312.5 985.6V991.4M1313.5 986.4V990.6M1314.5 982.2V994.8M1315.5 980.9V996.1M1316.5 982.6V994.4M1317.5 984.3V992.7M1318.5 986.3V990.7M1319.5 985.8V991.2M1320.5 985.3V991.7M1321.5 986.2V990.8M1480.5 987.4V989.6M1481.5 984.9V992.1M1482.5 986.5V990.5M1483.5 985.7V991.3M1484.5 984.8V992.2M1485.5 976.8V1000.2M1486.5 977.2V999.8M1487.5 978.6V998.4M1488.5 980.7V996.3M1489.5 985.5V991.5M1490.5 984.7V992.3M1491.5 984.4V992.6M1493.5 986.9V990.1M1494.5 986.1V990.9" stroke="#6c6cdc" stroke-width="1"/></svg>
<div style="left:4px;top:1060px;width:1701px;height:12px;background:#efefef"></div>
<div style="left:141px;top:1060px;width:1564px;height:12px;background:#f1f1f1"></div>
<div style="left:141px;top:1060px;width:1287px;height:12px;background:#cdcdcd"></div>
<div style="left:4px;top:1072px;width:1701px;height:57px;background:#f7f7fd;border-top:1px solid #c9c9cf;border-bottom:1px solid #c9c9cf;box-sizing:border-box"></div>
<svg style="left:5px;top:1074px;" width="10" height="53" viewBox="0 0 10 53"><rect width="10" height="53" fill="#fbfbff" stroke="#d9d9e2"/><rect x="1.5" y="3" width="7" height="1" fill="#bdbdc6"/><rect x="1.5" y="6" width="7" height="1" fill="#bdbdc6"/><rect x="1.5" y="9" width="7" height="1" fill="#bdbdc6"/><rect x="1.5" y="12" width="7" height="1" fill="#bdbdc6"/><rect x="1.5" y="15" width="7" height="1" fill="#bdbdc6"/><rect x="1.5" y="18" width="7" height="1" fill="#bdbdc6"/><rect x="1.5" y="21" width="7" height="1" fill="#bdbdc6"/><rect x="1.5" y="24" width="7" height="1" fill="#bdbdc6"/><rect x="1.5" y="27" width="7" height="1" fill="#bdbdc6"/><rect x="1.5" y="30" width="7" height="1" fill="#bdbdc6"/><rect x="1.5" y="33" width="7" height="1" fill="#bdbdc6"/><rect x="1.5" y="36" width="7" height="1" fill="#bdbdc6"/><rect x="1.5" y="39" width="7" height="1" fill="#bdbdc6"/><rect x="1.5" y="42" width="7" height="1" fill="#bdbdc6"/><rect x="1.5" y="45" width="7" height="1" fill="#bdbdc6"/><rect x="1.5" y="48" width="7" height="1" fill="#bdbdc6"/></svg>
<div class="t" style="left:21px;top:1079px;font-size:14.6px;color:#5e5a55;line-height:20px;letter-spacing:.1px">Project Rate (Hz):</div>
<div class="t" style="left:165px;top:1079px;font-size:14.6px;color:#5e5a55;line-height:20px">Snap-To</div>
<div class="t" style="left:253.5px;top:1079px;font-size:14.6px;color:#5e5a55;line-height:20px">Audio Position</div>
<div style="left:158px;top:1081px;width:1px;height:15px;background:#d0d0d8"></div>
<div style="left:158px;top:1105px;width:1px;height:16px;background:#d0d0d8"></div>
<div style="left:246px;top:1081px;width:1px;height:15px;background:#d0d0d8"></div>
<div style="left:246px;top:1105px;width:1px;height:16px;background:#d0d0d8"></div>
<div style="left:442px;top:1081px;width:1px;height:15px;background:#d0d0d8"></div>
<div style="left:442px;top:1105px;width:1px;height:16px;background:#d0d0d8"></div>
<div style="left:22px;top:1103px;width:82px;height:19px;background:#fff;border:1px solid #b9b9c1;border-radius:3px;box-sizing:border-box"></div>
<div style="left:26px;top:1105px;width:40px;height:15px;background:#3584e4"></div>
<div class="t" style="left:27.5px;top:1103px;font-size:12.2px;color:#fff;line-height:19px">48000</div>
<div style="left:81px;top:1104px;width:1px;height:17px;background:#b9b9c1"></div>
<svg style="left:84px;top:1103px;" width="18" height="19" viewBox="0 0 18 19"><path d="M4.5 6.5h9L9 14z" fill="#8c8c8c"/></svg>
<div style="left:166px;top:1103px;width:72px;height:21px;background:#fff;border:1px solid #c9c9cf;border-radius:3px;box-sizing:border-box"></div>
<div class="t" style="left:172px;top:1106.5px;font-size:12.4px;color:#3c3c3c;line-height:20px;height:17px;width:46px;overflow:hidden">Off</div>
<svg style="left:223px;top:1106px;" width="9" height="15" viewBox="0 0 9 15"><path d="M1.5 5.5L4.5 0.0L7.5 5.5zM1.5 9.5L4.5 15.0L7.5 9.5z" fill="#8a8a8a"/></svg>
<div style="left:452px;top:1079.5px;width:372px;height:20px;background:#fff;border:1px solid #c9c9cf;border-radius:3px;box-sizing:border-box"></div>
<div class="t" style="left:457.5px;top:1082.0px;font-size:12.3px;color:#3c3c3c;line-height:19px;height:16px;width:346.5px;overflow:hidden">Start and End of Selection</div>
<svg style="left:809px;top:1082.5px;" width="9" height="14" viewBox="0 0 9 14"><path d="M1.5 5.0L4.5 -0.5L7.5 5.0zM1.5 9.0L4.5 14.5L7.5 9.0z" fill="#8a8a8a"/></svg>
<div style="left:254.3px;top:1103px;width:182px;height:22px;background:#f4f4f8;border:1px solid #9c9ca6;border-radius:3px;box-sizing:border-box"></div>
<div style="left:256.8px;top:1105.5px;width:177px;height:17px;background:#c6cad6"></div>
<div style="left:256.8px;top:1105.5px;width:10px;height:17px;background:#dfe3ef"></div>
<div class="t" style="left:256.8px;top:1105.5px;width:10px;text-align:center;font-size:11.6px;color:#2424cc;line-height:17px">0</div>
<div style="left:266.8px;top:1105.5px;width:10px;height:17px;background:#dfe3ef"></div>
<div class="t" style="left:266.8px;top:1105.5px;width:10px;text-align:center;font-size:11.6px;color:#2424cc;line-height:17px">0</div>
<div style="left:289.8px;top:1105.5px;width:10px;height:17px;background:#dfe3ef"></div>
<div class="t" style="left:289.8px;top:1105.5px;width:10px;text-align:center;font-size:11.6px;color:#2424cc;line-height:17px">0</div>
<div style="left:299.8px;top:1105.5px;width:10px;height:17px;background:#dfe3ef"></div>
<div class="t" style="left:299.8px;top:1105.5px;width:10px;text-align:center;font-size:11.6px;color:#2424cc;line-height:17px">0</div>
<div style="left:326.3px;top:1105.5px;width:10px;height:17px;background:#dfe3ef"></div>
<div class="t" style="left:326.3px;top:1105.5px;width:10px;text-align:center;font-size:11.6px;color:#2424cc;line-height:17px">0</div>
<div style="left:336.3px;top:1105.5px;width:10px;height:17px;background:#dfe3ef"></div>
<div class="t" style="left:336.3px;top:1105.5px;width:10px;text-align:center;font-size:11.6px;color:#2424cc;line-height:17px">0</div>
<div style="left:364.0px;top:1105.5px;width:10px;height:17px;background:#dfe3ef"></div>
<div class="t" style="left:364.0px;top:1105.5px;width:10px;text-align:center;font-size:11.6px;color:#2424cc;line-height:17px">0</div>
<div style="left:374.0px;top:1105.5px;width:10px;height:17px;background:#dfe3ef"></div>
<div class="t" style="left:374.0px;top:1105.5px;width:10px;text-align:center;font-size:11.6px;color:#2424cc;line-height:17px">0</div>
<div class="t" style="left:280.5px;top:1105.5px;font-size:11.2px;color:#2424cc;line-height:17px;letter-spacing:-.2px">h</div>
<div class="t" style="left:313.3px;top:1105.5px;font-size:11.2px;color:#2424cc;line-height:17px;letter-spacing:-.2px">m</div>
<div class="t" style="left:348.8px;top:1105.5px;font-size:11.2px;color:#2424cc;line-height:17px;letter-spacing:-.2px">s+</div>
<div class="t" style="left:387.0px;top:1105.5px;font-size:11.2px;color:#2424cc;line-height:17px;letter-spacing:-.2px">frames</div>
<div style="left:426.3px;top:1105.5px;width:8.5px;height:17px;background:#dfe3ef"></div>
<svg style="left:426.3px;top:1105.5px;" width="9" height="17" viewBox="0 0 9 17"><path d="M1 6.500h7L4.500 11.500z" fill="#111"/></svg>
<div style="left:452.3px;top:1103px;width:182px;height:22px;background:#f4f4f8;border:1px solid #9c9ca6;border-radius:3px;box-sizing:border-box"></div>
<div style="left:454.8px;top:1105.5px;width:177px;height:17px;background:#c6cad6"></div>
<div style="left:454.8px;top:1105.5px;width:10px;height:17px;background:#dfe3ef"></div>
<div class="t" style="left:454.8px;top:1105.5px;width:10px;text-align:center;font-size:11.6px;color:#2424cc;line-height:17px">0</div>
<div style="left:464.8px;top:1105.5px;width:10px;height:17px;background:#dfe3ef"></div>
<div class="t" style="left:464.8px;top:1105.5px;width:10px;text-align:center;font-size:11.6px;color:#2424cc;line-height:17px">0</div>
<div style="left:487.8px;top:1105.5px;width:10px;height:17px;background:#dfe3ef"></div>
<div class="t" style="left:487.8px;top:1105.5px;width:10px;text-align:center;font-size:11.6px;color:#2424cc;line-height:17px">0</div>
<div style="left:497.8px;top:1105.5px;width:10px;height:17px;background:#dfe3ef"></div>
<div class="t" style="left:497.8px;top:1105.5px;width:10px;text-align:center;font-size:11.6px;color:#2424cc;line-height:17px">0</div>
<div style="left:524.3px;top:1105.5px;width:10px;height:17px;background:#dfe3ef"></div>
<div class="t" style="left:524.3px;top:1105.5px;width:10px;text-align:center;font-size:11.6px;color:#2424cc;line-height:17px">0</div>
<div style="left:534.3px;top:1105.5px;width:10px;height:17px;background:#dfe3ef"></div>
<div class="t" style="left:534.3px;top:1105.5px;width:10px;text-align:center;font-size:11.6px;color:#2424cc;line-height:17px">0</div>
<div style="left:562.0px;top:1105.5px;width:10px;height:17px;background:#dfe3ef"></div>
<div class="t" style="left:562.0px;top:1105.5px;width:10px;text-align:center;font-size:11.6px;color:#2424cc;line-height:17px">0</div>
<div style="left:572.0px;top:1105.5px;width:10px;height:17px;background:#dfe3ef"></div>
<div class="t" style="left:572.0px;top:1105.5px;width:10px;text-align:center;font-size:11.6px;color:#2424cc;line-height:17px">0</div>
<div class="t" style="left:478.5px;top:1105.5px;font-size:11.2px;color:#2424cc;line-height:17px;letter-spacing:-.2px">h</div>
<div class="t" style="left:511.3px;top:1105.5px;font-size:11.2px;color:#2424cc;line-height:17px;letter-spacing:-.2px">m</div>
<div class="t" style="left:546.8px;top:1105.5px;font-size:11.2px;color:#2424cc;line-height:17px;letter-spacing:-.2px">s+</div>
<div class="t" style="left:585.0px;top:1105.5px;font-size:11.2px;color:#2424cc;line-height:17px;letter-spacing:-.2px">frames</div>
<div style="left:624.3px;top:1105.5px;width:8.5px;height:17px;background:#dfe3ef"></div>
<svg style="left:624.3px;top:1105.5px;" width="9" height="17" viewBox="0 0 9 17"><path d="M1 6.500h7L4.500 11.500z" fill="#111"/></svg>
<div style="left:642px;top:1103px;width:182px;height:22px;background:#f4f4f8;border:1px solid #9c9ca6;border-radius:3px;box-sizing:border-box"></div>
<div style="left:644.5px;top:1105.5px;width:177px;height:17px;background:#c6cad6"></div>
<div style="left:644.5px;top:1105.5px;width:10px;height:17px;background:#dfe3ef"></div>
<div class="t" style="left:644.5px;top:1105.5px;width:10px;text-align:center;font-size:11.6px;color:#2424cc;line-height:17px">0</div>
<div style="left:654.5px;top:1105.5px;width:10px;height:17px;background:#dfe3ef"></div>
<div class="t" style="left:654.5px;top:1105.5px;width:10px;text-align:center;font-size:11.6px;color:#2424cc;line-height:17px">0</div>
<div style="left:677.5px;top:1105.5px;width:10px;height:17px;background:#dfe3ef"></div>
<div class="t" style="left:677.5px;top:1105.5px;width:10px;text-align:center;font-size:11.6px;color:#2424cc;line-height:17px">0</div>
<div style="left:687.5px;top:1105.5px;width:10px;height:17px;background:#dfe3ef"></div>
<div class="t" style="left:687.5px;top:1105.5px;width:10px;text-align:center;font-size:11.6px;color:#2424cc;line-height:17px">3</div>
<div style="left:714px;top:1105.5px;width:10px;height:17px;background:#dfe3ef"></div>
<div class="t" style="left:714px;top:1105.5px;width:10px;text-align:center;font-size:11.6px;color:#2424cc;line-height:17px">2</div>
<div style="left:724px;top:1105.5px;width:10px;height:17px;background:#dfe3ef"></div>
<div class="t" style="left:724px;top:1105.5px;width:10px;text-align:center;font-size:11.6px;color:#2424cc;line-height:17px">4</div>
<div style="left:751.7px;top:1105.5px;width:10px;height:17px;background:#dfe3ef"></div>
<div class="t" style="left:751.7px;top:1105.5px;width:10px;text-align:center;font-size:11.6px;color:#2424cc;line-height:17px">2</div>
<div style="left:761.7px;top:1105.5px;width:10px;height:17px;background:#dfe3ef"></div>
<div class="t" style="left:761.7px;top:1105.5px;width:10px;text-align:center;font-size:11.6px;color:#2424cc;line-height:17px">8</div>
<div class="t" style="left:668.2px;top:1105.5px;font-size:11.2px;color:#2424cc;line-height:17px;letter-spacing:-.2px">h</div>
<div class="t" style="left:701px;top:1105.5px;font-size:11.2px;color:#2424cc;line-height:17px;letter-spacing:-.2px">m</div>
<div class="t" style="left:736.5px;top:1105.5px;font-size:11.2px;color:#2424cc;line-height:17px;letter-spacing:-.2px">s+</div>
<div class="t" style="left:774.7px;top:1105.5px;font-size:11.2px;color:#2424cc;line-height:17px;letter-spacing:-.2px">frames</div>
<div style="left:814px;top:1105.5px;width:8.5px;height:17px;background:#dfe3ef"></div>
<svg style="left:814px;top:1105.5px;" width="9" height="17" viewBox="0 0 9 17"><path d="M1 6.500h7L4.500 11.500z" fill="#111"/></svg>
<div style="left:0px;top:1129px;width:1705px;height:26px;background:#efefef"></div>
<div class="t" style="left:9px;top:1134px;font-size:12px;color:#5e5a55;line-height:18px">Stopped.</div>
<div class="t" style="left:154px;top:1134px;font-size:12px;color:#5e5a55;line-height:18px">Click and drag to select audio</div>
<div id="svn" style="left:612px;top:104px;width:1080px;height:821px;">
<div style="left:0px;top:0px;width:1080px;height:821px;background:#efefef;border:1px solid #1d4f94;border-radius:4px 4px 0 0;box-sizing:border-box;box-shadow:0 0 7px 1px rgba(0,0,0,.36),0 6px 14px rgba(0,0,0,.3)"></div>
<div style="left:1px;top:1px;width:1078px;height:18px;background:linear-gradient(#9cc3f1,#5a9ae4 45%,#3a85de);border-radius:3px 3px 0 0"></div>
<div style="left:1px;top:19px;width:3px;height:801px;background:#3b86df"></div>
<div style="left:1078px;top:19px;width:1px;height:801px;background:#3b86df"></div>
<div style="left:1px;top:819px;width:1078px;height:1px;background:#3b86df"></div>
<div class="t s" style="left:200px;top:2px;width:632px;text-align:center;font:bold 12.55px 'Liberation Sans',sans-serif;color:#fff;line-height:18px;text-shadow:0 1px 1px rgba(0,40,110,.6)">RapidSVN - /project/terry/Lunatics/Production/lunatics/Episodes/S1E01-Prolog/Seq/PC-PressConference</div>
<svg style="left:9px;top:2px;" width="14" height="15" viewBox="0 0 14 15"><rect x=".5" y=".5" width="13" height="14" rx="2" fill="#000"/><circle cx="6" cy="10.5" r="2" fill="#fff"/><path d="M3 7.5c3-.5 6-2.5 8.5-5" stroke="#fff" stroke-width="1.3" fill="none"/><circle cx="3.5" cy="7" r="1.3" fill="#fff"/></svg>
<div style="left:27px;top:2px;width:1px;height:17px;background:rgba(255,255,255,.25)"></div>
<div style="left:1004px;top:2px;width:1px;height:17px;background:rgba(255,255,255,.28)"></div>
<div style="left:1027px;top:2px;width:1px;height:17px;background:rgba(255,255,255,.28)"></div>
<div style="left:1050px;top:2px;width:1px;height:17px;background:rgba(255,255,255,.28)"></div>
<div style="left:1074px;top:2px;width:1px;height:17px;background:rgba(255,255,255,.28)"></div>
<svg style="left:1005px;top:1px;" width="22" height="18" viewBox="0 0 22 18"><rect x="7.5" y="11" width="7" height="2.4" fill="#fff"/></svg>
<svg style="left:1028px;top:1px;" width="22" height="18" viewBox="0 0 22 18"><rect x="7" y="4.5" width="8" height="8" fill="none" stroke="#fff" stroke-width="1.8"/></svg>
<svg style="left:1051px;top:1px;" width="23" height="18" viewBox="0 0 23 18"><path d="M7 4.5l8.5 8.5M15.5 4.5L7 13" stroke="#fff" stroke-width="2.2"/></svg>
<div style="left:4px;top:19px;width:1071px;height:25px;background:#414141"></div>
<div class="t s" style="left:12px;top:22.799999999999997px;font-size:12.65px;color:#ededed;line-height:20px"><u>F</u>ile</div>
<div class="t s" style="left:48px;top:22.799999999999997px;font-size:12.65px;color:#ededed;line-height:20px"><u>V</u>iew</div>
<div class="t s" style="left:94px;top:22.799999999999997px;font-size:12.65px;color:#ededed;line-height:20px"><u>R</u>epository</div>
<div class="t s" style="left:177px;top:22.799999999999997px;font-size:12.65px;color:#ededed;line-height:20px"><u>M</u>odify</div>
<div class="t s" style="left:236px;top:22.799999999999997px;font-size:12.65px;color:#ededed;line-height:20px"><u>Q</u>uery</div>
<div class="t s" style="left:291px;top:22.799999999999997px;font-size:12.65px;color:#ededed;line-height:20px"><u>B</u>ookmarks</div>
<div class="t s" style="left:377px;top:22.799999999999997px;font-size:12.65px;color:#ededed;line-height:20px"><u>E</u>xtras</div>
<div class="t s" style="left:431px;top:22.799999999999997px;font-size:12.65px;color:#ededed;line-height:20px"><u>H</u>elp</div>
<div style="left:4px;top:44px;width:1071px;height:26px;background:#efefef"></div>
<svg style="left:6px;top:50px;" width="6" height="14" viewBox="0 0 6 14"><path d="M1 3h4M1 7h4M1 11h4" stroke="#c4c4c4" stroke-width="1"/></svg>
<svg width="0" height="0" style="left:0;top:0"><defs><linearGradient id="gb" x1="0" y1="0" x2="0" y2="1"><stop offset="0" stop-color="#7db4f2"/><stop offset="1" stop-color="#1e55c0"/></linearGradient><linearGradient id="go" x1="0" y1="0" x2="0" y2="1"><stop offset="0" stop-color="#ffc98a"/><stop offset="1" stop-color="#f27a0c"/></linearGradient><radialGradient id="gx" cx=".5" cy=".5" r=".6"><stop offset="0" stop-color="#f9a21d"/><stop offset="1" stop-color="#cf4318"/></radialGradient><linearGradient id="gd" x1="0" y1="0" x2="1" y2="1"><stop offset="0" stop-color="#fdfdff"/><stop offset="1" stop-color="#cfd8f2"/></linearGradient><linearGradient id="gc" x1="0" y1="0" x2="1" y2="0"><stop offset="0" stop-color="#f0f1f5"/><stop offset="1" stop-color="#b9bfd0"/></linearGradient><linearGradient id="gr" x1="0" y1="0" x2="1" y2="1"><stop offset="0" stop-color="#fbb596"/><stop offset="1" stop-color="#ee7a42"/></linearGradient></defs></svg>
<svg style="left:19px;top:49px;" width="17" height="17" viewBox="0 0 17 17"><g opacity=".38"><path d="M6.500 1.500h5.500l3.500 3.500v8.500h-9z" fill="#f6f6f6" stroke="#9a9a9a" stroke-width="1"/><path d="M12 1.500v3.500h3.500" fill="#f6f6f6" stroke="#9a9a9a" stroke-width="1"/><path d="M2.500 7.500h3v-3h3v3h3v3h-3v3h-3v-3h-3z" fill="#d8dcd8" stroke="#8a928a" stroke-width="1" transform="translate(-2,1)"/></g></svg>
<svg style="left:45px;top:49px;" width="17" height="17" viewBox="0 0 17 17"><path d="M6.500 1.500h5.500l3.500 3.500v8.500h-9z" fill="url(#gd)" stroke="#7d86ad" stroke-width="1"/><path d="M12 1.500v3.500h3.500" fill="url(#gd)" stroke="#7d86ad" stroke-width="1"/><path d="M1.500 7l6.500 7M8 7l-6.500 7" stroke="#c8421a" stroke-width="3.600" stroke-linecap="round"/><path d="M1.500 7l6.500 7M8 7l-6.500 7" stroke="url(#gx)" stroke-width="2.200" stroke-linecap="round"/></svg>
<svg style="left:71px;top:49px;" width="17" height="17" viewBox="0 0 17 17"><path d="M4.500 4v6a5.500 2.800 0 0 0 11 0v-6z" fill="url(#gc)" stroke="#8a90a6" stroke-width="1"/><ellipse cx="10" cy="4" rx="5.500" ry="2.800" fill="#eceef3" stroke="#8a90a6" stroke-width="1"/><path d="M3.500 5.500h4.500v4h3l-5.250 6-5.250-6h3z" fill="url(#gb)" stroke="#1f4fa8" stroke-width=".9" stroke-linejoin="round"/></svg>
<svg style="left:97px;top:49px;" width="17" height="17" viewBox="0 0 17 17"><path d="M4.500 4v6a5.500 2.800 0 0 0 11 0v-6z" fill="url(#gc)" stroke="#8a90a6" stroke-width="1"/><ellipse cx="10" cy="4" rx="5.500" ry="2.800" fill="#eceef3" stroke="#8a90a6" stroke-width="1"/><path d="M4 15.500h4.500v-4.500h3l-5.250-6-5.250 6h3z" fill="url(#go)" stroke="#c9620a" stroke-width=".9" stroke-linejoin="round"/></svg>
<svg style="left:123px;top:49px;" width="17" height="17" viewBox="0 0 17 17"><path d="M6.500 1.500h5.500l3.500 3.500v8.500h-9z" fill="url(#gd)" stroke="#7d86ad" stroke-width="1"/><path d="M12 1.500v3.500h3.500" fill="url(#gd)" stroke="#7d86ad" stroke-width="1"/><path d="M1 5.500v5.500h5.500z" fill="#6a5fc8" stroke="#4a3fa8" stroke-width=".6"/><path d="M3.500 9.500c2-3.500 7.500-3 8 1.200s-3.500 5.300-6 3.800" fill="none" stroke="#5a4fb8" stroke-width="2.600"/><path d="M3.500 9.500c2-3.500 7.500-3 8 1.200s-3.500 5.300-6 3.800" fill="none" stroke="#8f86e0" stroke-width="1.100"/></svg>
<svg style="left:149px;top:49px;" width="17" height="17" viewBox="0 0 17 17"><g opacity=".42"><path d="M1.500 1.500h6l3 3v8.500h-9z" fill="#f4f4f4" stroke="#a0a0a0"/><path d="M3.500 3.500v5M3.500 10v1.600" stroke="#b85a5a" stroke-width="1.700"/><path d="M6 10.500l3.500 4 6-10" stroke="#8a9a8a" stroke-width="2.400" fill="none"/></g></svg>
<div style="left:175px;top:49px;width:1px;height:16px;background:#cfcfcf"></div>
<svg style="left:187px;top:49px;" width="17" height="17" viewBox="0 0 17 17"><path d="M6.500 1.500h5.500l3.500 3.500v8.500h-9z" fill="url(#gd)" stroke="#7d86ad" stroke-width="1"/><path d="M12 1.500v3.500h3.500" fill="url(#gd)" stroke="#7d86ad" stroke-width="1"/><circle cx="5.500" cy="10.500" r="4.800" fill="url(#gb)" stroke="#1f4fa6" stroke-width=".9"/><path d="M5.500 10v3.300" stroke="#fff" stroke-width="1.800"/><circle cx="5.500" cy="7.800" r="1.100" fill="#fff"/></svg>
<svg style="left:213px;top:49px;" width="17" height="17" viewBox="0 0 17 17"><path d="M5 2h9.500c1.500 0 1.500 2.500 0 2.500h-1.500c-1.500 2.500 1.500 5-.5 8.500-.5 1.500-1.500 2-3 2H2.500c-1.500 0-1.500-2.500 0-2.500h1.500c1.500-2.500-1.500-5 .5-8.500z" fill="#f0d58a" stroke="#b08a2e" stroke-width="1"/><path d="M13 4.500h-3M4 12.500h3" stroke="#b08a2e" stroke-width=".8" fill="none"/></svg>
<div style="left:239px;top:49px;width:1px;height:16px;background:#cfcfcf"></div>
<svg style="left:251px;top:49px;" width="17" height="17" viewBox="0 0 17 17"><rect x="1.500" y="1.500" width="5" height="3" fill="#eef1fb" stroke="#6a7cc0"/><rect x="1.500" y="6.500" width="5" height="3" fill="#eef1fb" stroke="#6a7cc0"/><rect x="1.500" y="11.500" width="5" height="3" fill="#eef1fb" stroke="#6a7cc0"/><path d="M9 1h2.500v8l3.500 1-5.500 5.500z" fill="url(#gb)" stroke="#2a5cc0" stroke-width=".7"/></svg>
<div style="left:273px;top:45px;width:24px;height:24px;background:#e2e2e2;border:1px solid #bdbdbd;border-radius:3px;box-sizing:border-box"></div>
<div style="left:299px;top:45px;width:24px;height:24px;background:#e2e2e2;border:1px solid #bdbdbd;border-radius:3px;box-sizing:border-box"></div>
<div style="left:325px;top:45px;width:24px;height:24px;background:#e2e2e2;border:1px solid #bdbdbd;border-radius:3px;box-sizing:border-box"></div>
<div style="left:351px;top:45px;width:24px;height:24px;background:#e2e2e2;border:1px solid #bdbdbd;border-radius:3px;box-sizing:border-box"></div>
<svg style="left:276px;top:48px;" width="18" height="18" viewBox="0 0 18 18"><path d="M3.500 2.500h8.500l3.500 3.500v10h-12z" fill="url(#gd)" stroke="#7d86ad" stroke-width="1"/><path d="M12 2.500v3.500h3.500" fill="url(#gd)" stroke="#7d86ad" stroke-width="1"/></svg>
<div class="t s" style="left:281.79999999999995px;top:52.30000000000001px;font:bold 9.5px 'Liberation Sans',sans-serif;color:#2f2f86;line-height:12px">?</div>
<svg style="left:302px;top:48px;" width="18" height="18" viewBox="0 0 18 18"><path d="M3.500 2.500h8.500l3.500 3.500v10h-12z" fill="url(#gd)" stroke="#7d86ad" stroke-width="1"/><path d="M12 2.500v3.500h3.500" fill="url(#gd)" stroke="#7d86ad" stroke-width="1"/></svg>
<svg style="left:328px;top:48px;" width="18" height="18" viewBox="0 0 18 18"><path d="M3.500 2.500h8.500l3.500 3.500v10h-12z" fill="url(#gr)" stroke="#e2602a" stroke-width="1"/><path d="M12 2.500v3.500h3.500" fill="url(#gr)" stroke="#e2602a" stroke-width="1"/></svg>
<svg style="left:354px;top:48px;" width="18" height="18" viewBox="0 0 18 18"><path d="M3.500 2.500h8.500l3.500 3.500v10h-12z" fill="url(#gr)" stroke="#e2602a" stroke-width="1"/><path d="M12 2.500v3.500h3.500" fill="url(#gr)" stroke="#e2602a" stroke-width="1"/><path d="M3.500 4.500v7.500M3.500 13v2.500" stroke="#fff" stroke-width="3.400"/><path d="M3.500 5v6.500M3.500 13.200v2.200" stroke="#e81010" stroke-width="2"/></svg>
<div style="left:382px;top:49px;width:1px;height:16px;background:#cfcfcf"></div>
<svg style="left:392px;top:49px;" width="17" height="17" viewBox="0 0 17 17"><path d="M2 8a6 5.500 0 0 1 10.500-3.500l2-2v6h-6l2-2A3.500 3 0 0 0 5 8z" fill="#86b2ea" stroke="#2a5cae" stroke-width=".9"/><path d="M15 9a6 5.500 0 0 1-10.500 3.500l-2 2v-6h6l-2 2A3.500 3 0 0 0 12 9z" fill="#86b2ea" stroke="#2a5cae" stroke-width=".9"/></svg>
<div style="left:420px;top:49px;width:1px;height:16px;background:#cfcfcf"></div>
<svg style="left:430px;top:49px;" width="17" height="17" viewBox="0 0 17 17"><circle cx="8.500" cy="8.500" r="7" fill="#e4e4e4" stroke="#d0d0d0"/><path d="M5.500 5.500l6 6M11.500 5.500l-6 6" stroke="#fafafa" stroke-width="2"/></svg>
<div style="left:4px;top:70px;width:256px;height:403px;background:#fff;border:1px solid #b4b4b4;border-right:none;box-sizing:border-box"></div>
<div style="left:260px;top:70px;width:12px;height:403px;background:#efefef;border-top:1px solid #b4b4b4;box-sizing:border-box"></div>
<div style="left:260px;top:71px;width:12px;height:333px;background:#c9c9c9;box-shadow:inset 1px 0 0 #b0b0b0"></div>
<div style="left:5px;top:71px;width:254px;height:401px;overflow:hidden">
<svg style="left:9px;top:6.699999999999999px;" width="12" height="12" viewBox="0 0 12 12"><path d="M1.500 2h9L6 10.500z" fill="#8a8a8a" stroke="#666" stroke-width=".6"/></svg>
<svg style="left:33px;top:5.5px;" width="17" height="17" viewBox="0 0 17 17"><rect x="2" y="1.500" width="12" height="9" rx="1" fill="#dfe6f6" stroke="#6f7fb0"/><rect x="3.500" y="3" width="9" height="6" fill="#4f8ff0"/><path d="M1.500 14.500h13l-1-2.500h-11z" fill="#e8ecf6" stroke="#8a93b8" stroke-width=".8"/></svg>
<div class="t s" style="left:53px;top:6.0px;font-size:12.5px;color:#3a3a3a;line-height:20px">Bookmarks</div>
<svg style="left:24px;top:31.7px;" width="12" height="12" viewBox="0 0 12 12"><path d="M1.500 2h9L6 10.500z" fill="#8a8a8a" stroke="#666" stroke-width=".6"/></svg>
<svg style="left:48px;top:30.5px;" width="17" height="17" viewBox="0 0 17 17"><path d="M2 2.500h5v12H2z" fill="#dfe6f6" stroke="#6f7fb0"/><path d="M7 2.500h6.500v12H7z" fill="#f0f3fb" stroke="#6f7fb0"/><path d="M4.500 1v13" stroke="#6f8fd0" stroke-width="2"/></svg>
<div class="t s" style="left:68px;top:31.0px;font-size:12.5px;color:#3a3a3a;line-height:20px">/project/terry/Lunatics/Production/lunatics</div>
<svg style="left:39px;top:56.7px;" width="12" height="12" viewBox="0 0 12 12"><path d="M1.500 2h9L6 10.500z" fill="#8a8a8a" stroke="#666" stroke-width=".6"/></svg>
<svg style="left:63px;top:55.5px;" width="17" height="17" viewBox="0 0 17 17"><path d="M1.500 3.500v10h11.500V5H7.500l-1.500-1.500z" fill="#f0cf6a" stroke="#c79a22" stroke-width="1"/><path d="M3.500 7.500h12l-2.500 6.500H1.500z" fill="#fbe9a6" stroke="#c79a22" stroke-width="1"/></svg>
<div class="t s" style="left:83px;top:56.0px;font-size:12.5px;color:#3a3a3a;line-height:20px">Episodes</div>
<svg style="left:55px;top:82.2px;" width="12" height="12" viewBox="0 0 12 12"><path d="M2 1.500v9l8-4.500z" fill="#8a8a8a" stroke="#666" stroke-width=".6"/></svg>
<svg style="left:78px;top:80.5px;" width="17" height="17" viewBox="0 0 17 17"><path d="M1.500 4.500v9.500h13V5.500H8l-1.500-2h-4z" fill="#f5d87a" stroke="#c79a22" stroke-width="1"/><path d="M2.500 7.500h11v6h-11z" fill="#fbe9a6"/></svg>
<div class="t s" style="left:98px;top:81.0px;font-size:12.5px;color:#3a3a3a;line-height:20px">S1E01-NoChildrenInSpace</div>
<svg style="left:54px;top:106.7px;" width="12" height="12" viewBox="0 0 12 12"><path d="M1.500 2h9L6 10.500z" fill="#8a8a8a" stroke="#666" stroke-width=".6"/></svg>
<svg style="left:78px;top:105.5px;" width="17" height="17" viewBox="0 0 17 17"><path d="M1.500 3.500v10h11.500V5H7.500l-1.500-1.500z" fill="#f0cf6a" stroke="#c79a22" stroke-width="1"/><path d="M3.500 7.500h12l-2.500 6.500H1.500z" fill="#fbe9a6" stroke="#c79a22" stroke-width="1"/></svg>
<div class="t s" style="left:98px;top:106.0px;font-size:12.5px;color:#3a3a3a;line-height:20px">S1E01-Prolog</div>
<svg style="left:93px;top:130.5px;" width="17" height="17" viewBox="0 0 17 17"><path d="M1.500 4.500v9.500h13V5.500H8l-1.500-2h-4z" fill="#f5d87a" stroke="#c79a22" stroke-width="1"/><path d="M2.500 7.500h11v6h-11z" fill="#fbe9a6"/></svg>
<div class="t s" style="left:113px;top:131.0px;font-size:12.5px;color:#3a3a3a;line-height:20px">Credits</div>
<svg style="left:69px;top:156.7px;" width="12" height="12" viewBox="0 0 12 12"><path d="M1.500 2h9L6 10.500z" fill="#8a8a8a" stroke="#666" stroke-width=".6"/></svg>
<svg style="left:93px;top:155.5px;" width="17" height="17" viewBox="0 0 17 17"><path d="M1.500 3.500v10h11.500V5H7.500l-1.500-1.500z" fill="#f0cf6a" stroke="#c79a22" stroke-width="1"/><path d="M3.500 7.500h12l-2.500 6.500H1.500z" fill="#fbe9a6" stroke="#c79a22" stroke-width="1"/></svg>
<div class="t s" style="left:113px;top:156.0px;font-size:12.5px;color:#3a3a3a;line-height:20px">Seq</div>
<svg style="left:85px;top:182.2px;" width="12" height="12" viewBox="0 0 12 12"><path d="M2 1.500v9l8-4.500z" fill="#8a8a8a" stroke="#666" stroke-width=".6"/></svg>
<svg style="left:108px;top:180.5px;" width="17" height="17" viewBox="0 0 17 17"><path d="M1.500 4.500v9.500h13V5.500H8l-1.500-2h-4z" fill="#f5d87a" stroke="#c79a22" stroke-width="1"/><path d="M2.500 7.500h11v6h-11z" fill="#fbe9a6"/></svg>
<div class="t s" style="left:128px;top:181.0px;font-size:12.5px;color:#3a3a3a;line-height:20px">LA-Launch</div>
<svg style="left:85px;top:207.2px;" width="12" height="12" viewBox="0 0 12 12"><path d="M2 1.500v9l8-4.500z" fill="#8a8a8a" stroke="#666" stroke-width=".6"/></svg>
<svg style="left:108px;top:205.5px;" width="17" height="17" viewBox="0 0 17 17"><path d="M1.500 4.500v9.500h13V5.500H8l-1.500-2h-4z" fill="#f5d87a" stroke="#c79a22" stroke-width="1"/><path d="M2.500 7.500h11v6h-11z" fill="#fbe9a6"/></svg>
<div style="left:125px;top:203.0px;width:200px;height:24px;background:#3685e2"></div>
<div class="t s" style="left:128px;top:206.0px;font-size:12.5px;color:#fff;line-height:20px">PC-PressConference</div>
<svg style="left:108px;top:230.5px;" width="17" height="17" viewBox="0 0 17 17"><path d="M1.500 4.500v9.500h13V5.500H8l-1.500-2h-4z" fill="#f5d87a" stroke="#c79a22" stroke-width="1"/><path d="M2.500 7.500h11v6h-11z" fill="#fbe9a6"/></svg>
<div class="t s" style="left:128px;top:231.0px;font-size:12.5px;color:#3a3a3a;line-height:20px">SF-SoyuzFlight</div>
<svg style="left:108px;top:255.5px;" width="17" height="17" viewBox="0 0 17 17"><path d="M1.500 4.500v9.500h13V5.500H8l-1.500-2h-4z" fill="#f5d87a" stroke="#c79a22" stroke-width="1"/><path d="M2.500 7.500h11v6h-11z" fill="#fbe9a6"/></svg>
<div class="t s" style="left:128px;top:256.0px;font-size:12.5px;color:#3a3a3a;line-height:20px">SR-SoyuzRollout</div>
<svg style="left:108px;top:280.5px;" width="17" height="17" viewBox="0 0 17 17"><path d="M1.500 4.500v9.500h13V5.500H8l-1.500-2h-4z" fill="#f5d87a" stroke="#c79a22" stroke-width="1"/><path d="M2.500 7.500h11v6h-11z" fill="#fbe9a6"/></svg>
<div class="t s" style="left:128px;top:281.0px;font-size:12.5px;color:#3a3a3a;line-height:20px">SU-SuitingUp</div>
<svg style="left:108px;top:305.5px;" width="17" height="17" viewBox="0 0 17 17"><path d="M1.500 4.500v9.500h13V5.500H8l-1.500-2h-4z" fill="#f5d87a" stroke="#c79a22" stroke-width="1"/><path d="M2.500 7.500h11v6h-11z" fill="#fbe9a6"/></svg>
<div class="t s" style="left:128px;top:306.0px;font-size:12.5px;color:#3a3a3a;line-height:20px">TB-TouringBaikonur</div>
<svg style="left:108px;top:330.5px;" width="17" height="17" viewBox="0 0 17 17"><path d="M1.500 4.500v9.500h13V5.500H8l-1.500-2h-4z" fill="#f5d87a" stroke="#c79a22" stroke-width="1"/><path d="M2.500 7.500h11v6h-11z" fill="#fbe9a6"/></svg>
<div class="t s" style="left:128px;top:331.0px;font-size:12.5px;color:#3a3a3a;line-height:20px">TR-Train</div>
<svg style="left:55px;top:357.2px;" width="12" height="12" viewBox="0 0 12 12"><path d="M2 1.500v9l8-4.500z" fill="#8a8a8a" stroke="#666" stroke-width=".6"/></svg>
<svg style="left:78px;top:355.5px;" width="17" height="17" viewBox="0 0 17 17"><path d="M1.500 4.500v9.500h13V5.500H8l-1.500-2h-4z" fill="#f5d87a" stroke="#c79a22" stroke-width="1"/><path d="M2.500 7.500h11v6h-11z" fill="#fbe9a6"/></svg>
<div class="t s" style="left:98px;top:356.0px;font-size:12.5px;color:#3a3a3a;line-height:20px">S1E02-Earth</div>
<svg style="left:55px;top:382.2px;" width="12" height="12" viewBox="0 0 12 12"><path d="M2 1.500v9l8-4.500z" fill="#8a8a8a" stroke="#666" stroke-width=".6"/></svg>
<svg style="left:78px;top:380.5px;" width="17" height="17" viewBox="0 0 17 17"><path d="M1.500 4.500v9.500h13V5.500H8l-1.500-2h-4z" fill="#f5d87a" stroke="#c79a22" stroke-width="1"/><path d="M2.500 7.500h11v6h-11z" fill="#fbe9a6"/></svg>
<div class="t s" style="left:98px;top:381.0px;font-size:12.5px;color:#3a3a3a;line-height:20px">S1E03-Cyborg</div>
</div>
<div style="left:5px;top:474px;width:186px;height:10px;background:#c9c9c9"></div>
<div style="left:273px;top:275px;width:4px;height:1px;background:#b5b5b5"></div>
<div style="left:273px;top:278px;width:4px;height:1px;background:#b5b5b5"></div>
<div style="left:277px;top:70px;width:798px;height:403px;background:#fff;border:1px solid #b4b4b4;box-sizing:border-box"></div>
<div style="left:278px;top:99px;width:796px;height:1px;background:#d9d9d9"></div>
<div class="t s" style="left:284px;top:76.69999999999999px;font-size:12.4px;color:#5c6670;line-height:20px">Name</div>
<div class="t s" style="left:624px;top:76.69999999999999px;font-size:12.4px;color:#5c6670;line-height:20px">Revision</div>
<div class="t s" style="left:699px;top:76.69999999999999px;font-size:12.4px;color:#5c6670;line-height:20px">Rep. Rev.</div>
<div class="t s" style="left:774px;top:76.69999999999999px;font-size:12.4px;color:#5c6670;line-height:20px">Author</div>
<div class="t s" style="left:874px;top:76.69999999999999px;font-size:12.4px;color:#5c6670;line-height:20px">Status</div>
<div class="t s" style="left:974px;top:76.69999999999999px;font-size:12.4px;color:#5c6670;line-height:20px">Prop Status</div>
<svg style="left:328px;top:82px;" width="12" height="10" viewBox="0 0 12 10"><path d="M1.500 2h9L6 8z" fill="#7c7c7c"/></svg>
<div style="left:616px;top:75px;width:1px;height:21px;background:#dcdcdc"></div>
<div style="left:691px;top:75px;width:1px;height:21px;background:#dcdcdc"></div>
<div style="left:766px;top:75px;width:1px;height:21px;background:#dcdcdc"></div>
<div style="left:866px;top:75px;width:1px;height:21px;background:#dcdcdc"></div>
<div style="left:966px;top:75px;width:1px;height:21px;background:#dcdcdc"></div>
<div style="left:1066px;top:75px;width:1px;height:21px;background:#dcdcdc"></div>
<svg style="left:280px;top:103.5px;" width="17" height="17" viewBox="0 0 17 17"><path d="M1.500 4.500v9.500h13V5.500H8l-1.500-2h-4z" fill="#f5d87a" stroke="#c79a22" stroke-width="1"/><path d="M2.500 7.500h11v6h-11z" fill="#fbe9a6"/></svg>
<div class="t s" style="left:300.5px;top:103.0px;font-size:12.4px;color:#3a3a3a;line-height:20px">.</div>
<div class="t s" style="left:620px;top:103.0px;font-size:12.4px;color:#3a3a3a;line-height:20px">704</div>
<div class="t s" style="left:695px;top:103.0px;font-size:12.4px;color:#3a3a3a;line-height:20px">685</div>
<div class="t s" style="left:770px;top:103.0px;font-size:12.4px;color:#3a3a3a;line-height:20px">terry</div>
<div class="t s" style="left:1070px;top:103.0px;font-size:12.4px;color:#3a3a3a;line-height:20px;width:4.500px;overflow:hidden;font-family:'Liberation Sans',sans-serif;font-size:13.5px">1</div>
<svg style="left:280px;top:128.5px;" width="17" height="17" viewBox="0 0 17 17"><path d="M1.500 4.500v9.500h13V5.500H8l-1.500-2h-4z" fill="#f5d87a" stroke="#c79a22" stroke-width="1"/><path d="M2.500 7.500h11v6h-11z" fill="#fbe9a6"/><rect x="4" y="6.500" width="8" height="7" fill="#fff" opacity=".85"/><text x="8" y="13" text-anchor="middle" font-family="Liberation Sans,sans-serif" font-weight="bold" font-size="8.500" fill="#3b3b9c">?</text></svg>
<div class="t s" style="left:300.5px;top:128.0px;font-size:12.4px;color:#3a3a3a;line-height:20px">S1E01-PC-PressConference-stems-C_data</div>
<div class="t s" style="left:870px;top:128.0px;font-size:12.4px;color:#3a3a3a;line-height:20px">unversioned</div>
<svg style="left:280px;top:153.5px;" width="17" height="17" viewBox="0 0 17 17"><path d="M1.500 4.500v9.500h13V5.500H8l-1.500-2h-4z" fill="#f5d87a" stroke="#c79a22" stroke-width="1"/><path d="M2.500 7.500h11v6h-11z" fill="#fbe9a6"/><rect x="4" y="6.500" width="8" height="7" fill="#fff" opacity=".85"/><text x="8" y="13" text-anchor="middle" font-family="Liberation Sans,sans-serif" font-weight="bold" font-size="8.500" fill="#3b3b9c">?</text></svg>
<div class="t s" style="left:300.5px;top:153.0px;font-size:12.4px;color:#3a3a3a;line-height:20px">S1E01-PC-PressConference-stems_data</div>
<div class="t s" style="left:870px;top:153.0px;font-size:12.4px;color:#3a3a3a;line-height:20px">unversioned</div>
<svg style="left:280px;top:178.5px;" width="17" height="17" viewBox="0 0 17 17"><path d="M2.500 1.500h7.500l3.500 3.500v10h-11z" fill="#eef1fb" stroke="#7d86ad" stroke-width="1"/><path d="M10 1.500v3.500h3.500" fill="none" stroke="#7d86ad" stroke-width="1"/></svg>
<div class="t s" style="left:300.5px;top:178.0px;font-size:12.4px;color:#3a3a3a;line-height:20px">S1E01-PC-1-PressConference-anim.blend</div>
<div class="t s" style="left:620px;top:178.0px;font-size:12.4px;color:#3a3a3a;line-height:20px">704</div>
<div class="t s" style="left:695px;top:178.0px;font-size:12.4px;color:#3a3a3a;line-height:20px">676</div>
<div class="t s" style="left:770px;top:178.0px;font-size:12.4px;color:#3a3a3a;line-height:20px">terry</div>
<div class="t s" style="left:1070px;top:178.0px;font-size:12.4px;color:#3a3a3a;line-height:20px;width:4.500px;overflow:hidden;font-family:'Liberation Sans',sans-serif;font-size:13.5px">1</div>
<svg style="left:280px;top:203.5px;" width="17" height="17" viewBox="0 0 17 17"><path d="M2.500 1.500h7.500l3.500 3.500v10h-11z" fill="#eef1fb" stroke="#7d86ad" stroke-width="1"/><path d="M10 1.500v3.500h3.500" fill="none" stroke="#7d86ad" stroke-width="1"/></svg>
<div class="t s" style="left:300.5px;top:203.0px;font-size:12.4px;color:#3a3a3a;line-height:20px">S1E01-PC-1-PressConference-cam.blend</div>
<div class="t s" style="left:620px;top:203.0px;font-size:12.4px;color:#3a3a3a;line-height:20px">704</div>
<div class="t s" style="left:695px;top:203.0px;font-size:12.4px;color:#3a3a3a;line-height:20px">677</div>
<div class="t s" style="left:770px;top:203.0px;font-size:12.4px;color:#3a3a3a;line-height:20px">terry</div>
<div class="t s" style="left:1070px;top:203.0px;font-size:12.4px;color:#3a3a3a;line-height:20px;width:4.500px;overflow:hidden;font-family:'Liberation Sans',sans-serif;font-size:13.5px">1</div>
<svg style="left:280px;top:228.5px;" width="17" height="17" viewBox="0 0 17 17"><path d="M2.500 1.500h7.500l3.500 3.500v10h-11z" fill="#eef1fb" stroke="#7d86ad" stroke-width="1"/><path d="M10 1.500v3.500h3.500" fill="none" stroke="#7d86ad" stroke-width="1"/></svg>
<div class="t s" style="left:300.5px;top:228.0px;font-size:12.4px;color:#3a3a3a;line-height:20px">S1E01-PC-1-PressConference-extras.blend</div>
<div class="t s" style="left:620px;top:228.0px;font-size:12.4px;color:#3a3a3a;line-height:20px">704</div>
<div class="t s" style="left:695px;top:228.0px;font-size:12.4px;color:#3a3a3a;line-height:20px">677</div>
<div class="t s" style="left:770px;top:228.0px;font-size:12.4px;color:#3a3a3a;line-height:20px">terry</div>
<div class="t s" style="left:1070px;top:228.0px;font-size:12.4px;color:#3a3a3a;line-height:20px;width:4.500px;overflow:hidden;font-family:'Liberation Sans',sans-serif;font-size:13.5px">1</div>
<svg style="left:280px;top:253.5px;" width="17" height="17" viewBox="0 0 17 17"><path d="M2.500 1.500h7.500l3.500 3.500v10h-11z" fill="#eef1fb" stroke="#7d86ad" stroke-width="1"/><path d="M10 1.500v3.500h3.500" fill="none" stroke="#7d86ad" stroke-width="1"/><text x="7.800" y="12.500" text-anchor="middle" font-family="Liberation Sans,sans-serif" font-weight="bold" font-size="8.500" fill="#3b3b9c">?</text></svg>
<div class="t s" style="left:300.5px;top:253.0px;font-size:12.4px;color:#3a3a3a;line-height:20px">S1E01-PC-1-PressConference-script.sh</div>
<div class="t s" style="left:870px;top:253.0px;font-size:12.4px;color:#3a3a3a;line-height:20px">unversioned</div>
<svg style="left:280px;top:278.5px;" width="17" height="17" viewBox="0 0 17 17"><path d="M2.500 1.500h7.500l3.500 3.500v10h-11z" fill="#eef1fb" stroke="#7d86ad" stroke-width="1"/><path d="M10 1.500v3.500h3.500" fill="none" stroke="#7d86ad" stroke-width="1"/><text x="7.800" y="12.500" text-anchor="middle" font-family="Liberation Sans,sans-serif" font-weight="bold" font-size="8.500" fill="#3b3b9c">?</text></svg>
<div class="t s" style="left:300.5px;top:278.0px;font-size:12.4px;color:#3a3a3a;line-height:20px">S1E01-PC-1-PressConference-script.sh.mlt</div>
<div class="t s" style="left:870px;top:278.0px;font-size:12.4px;color:#3a3a3a;line-height:20px">unversioned</div>
<svg style="left:280px;top:303.5px;" width="17" height="17" viewBox="0 0 17 17"><path d="M2.500 1.500h7.500l3.500 3.500v10h-11z" fill="#eef1fb" stroke="#7d86ad" stroke-width="1"/><path d="M10 1.500v3.500h3.500" fill="none" stroke="#7d86ad" stroke-width="1"/></svg>
<div class="t s" style="left:300.5px;top:303.0px;font-size:12.4px;color:#3a3a3a;line-height:20px">S1E01-PC-1-PressConference.kdenlive</div>
<div class="t s" style="left:620px;top:303.0px;font-size:12.4px;color:#3a3a3a;line-height:20px">704</div>
<div class="t s" style="left:695px;top:303.0px;font-size:12.4px;color:#3a3a3a;line-height:20px">678</div>
<div class="t s" style="left:770px;top:303.0px;font-size:12.4px;color:#3a3a3a;line-height:20px">terry</div>
<div class="t s" style="left:1070px;top:303.0px;font-size:12.4px;color:#3a3a3a;line-height:20px;width:4.500px;overflow:hidden;font-family:'Liberation Sans',sans-serif;font-size:13.5px">1</div>
<svg style="left:280px;top:328.5px;" width="17" height="17" viewBox="0 0 17 17"><path d="M2.500 1.500h7.500l3.500 3.500v10h-11z" fill="#eef1fb" stroke="#7d86ad" stroke-width="1"/><path d="M10 1.500v3.500h3.500" fill="none" stroke="#7d86ad" stroke-width="1"/></svg>
<div class="t s" style="left:300.5px;top:328.0px;font-size:12.4px;color:#3a3a3a;line-height:20px">S1E01-PC-PressConference-linking.pdf</div>
<div class="t s" style="left:620px;top:328.0px;font-size:12.4px;color:#3a3a3a;line-height:20px">704</div>
<div class="t s" style="left:695px;top:328.0px;font-size:12.4px;color:#3a3a3a;line-height:20px">685</div>
<div class="t s" style="left:770px;top:328.0px;font-size:12.4px;color:#3a3a3a;line-height:20px">terry</div>
<div class="t s" style="left:1070px;top:328.0px;font-size:12.4px;color:#3a3a3a;line-height:20px;width:4.500px;overflow:hidden;font-family:'Liberation Sans',sans-serif;font-size:13.5px">1</div>
<svg style="left:280px;top:353.5px;" width="17" height="17" viewBox="0 0 17 17"><path d="M2.500 1.500h7.500l3.500 3.500v10h-11z" fill="#eef1fb" stroke="#7d86ad" stroke-width="1"/><path d="M10 1.500v3.500h3.500" fill="none" stroke="#7d86ad" stroke-width="1"/><text x="7.800" y="12.500" text-anchor="middle" font-family="Liberation Sans,sans-serif" font-weight="bold" font-size="8.500" fill="#3b3b9c">?</text></svg>
<div class="t s" style="left:300.5px;top:353.0px;font-size:12.4px;color:#3a3a3a;line-height:20px">S1E01-PC-PressConference-linking.png</div>
<div class="t s" style="left:870px;top:353.0px;font-size:12.4px;color:#3a3a3a;line-height:20px">unversioned</div>
<svg style="left:280px;top:378.5px;" width="17" height="17" viewBox="0 0 17 17"><path d="M2.500 1.500h7.500l3.500 3.500v10h-11z" fill="#eef1fb" stroke="#7d86ad" stroke-width="1"/><path d="M10 1.500v3.500h3.500" fill="none" stroke="#7d86ad" stroke-width="1"/></svg>
<div class="t s" style="left:300.5px;top:378.0px;font-size:12.4px;color:#3a3a3a;line-height:20px">S1E01-PC-PressConference-linking.svg</div>
<div class="t s" style="left:620px;top:378.0px;font-size:12.4px;color:#3a3a3a;line-height:20px">704</div>
<div class="t s" style="left:695px;top:378.0px;font-size:12.4px;color:#3a3a3a;line-height:20px">685</div>
<div class="t s" style="left:770px;top:378.0px;font-size:12.4px;color:#3a3a3a;line-height:20px">terry</div>
<div class="t s" style="left:1070px;top:378.0px;font-size:12.4px;color:#3a3a3a;line-height:20px;width:4.500px;overflow:hidden;font-family:'Liberation Sans',sans-serif;font-size:13.5px">1</div>
<svg style="left:280px;top:403.5px;" width="17" height="17" viewBox="0 0 17 17"><path d="M2.500 1.500h7.500l3.500 3.500v10h-11z" fill="#eef1fb" stroke="#7d86ad" stroke-width="1"/><path d="M10 1.500v3.500h3.500" fill="none" stroke="#7d86ad" stroke-width="1"/><text x="7.800" y="12.500" text-anchor="middle" font-family="Liberation Sans,sans-serif" font-weight="bold" font-size="8.500" fill="#3b3b9c">?</text></svg>
<div class="t s" style="left:300.5px;top:403.0px;font-size:12.4px;color:#3a3a3a;line-height:20px">S1E01-PC-PressConference-stems-C.aup</div>
<div class="t s" style="left:870px;top:403.0px;font-size:12.4px;color:#3a3a3a;line-height:20px">unversioned</div>
<svg style="left:280px;top:428.5px;" width="17" height="17" viewBox="0 0 17 17"><path d="M2.500 1.500h7.500l3.500 3.500v10h-11z" fill="#eef1fb" stroke="#7d86ad" stroke-width="1"/><path d="M10 1.500v3.500h3.500" fill="none" stroke="#7d86ad" stroke-width="1"/><text x="7.800" y="12.500" text-anchor="middle" font-family="Liberation Sans,sans-serif" font-weight="bold" font-size="8.500" fill="#3b3b9c">?</text></svg>
<div class="t s" style="left:300.5px;top:428.0px;font-size:12.4px;color:#3a3a3a;line-height:20px">S1E01-PC-PressConference-stems.aup</div>
<div class="t s" style="left:870px;top:428.0px;font-size:12.4px;color:#3a3a3a;line-height:20px">unversioned</div>
<div style="left:278px;top:425px;width:796px;height:25px;border:1px dotted #555;border-right:none;box-sizing:border-box"></div>
<div style="left:277px;top:474px;width:277px;height:10px;background:#c9c9c9"></div>
<div style="left:550px;top:479px;width:1px;height:4px;background:#b5b5b5"></div>
<div style="left:553px;top:479px;width:1px;height:4px;background:#b5b5b5"></div>
<div style="left:4px;top:490px;width:1071px;height:302px;background:#fff;border:1px solid #b4b4b4;box-sizing:border-box"></div>
<div style="left:1062px;top:491px;width:12px;height:300px;background:#efefef;box-shadow:inset 1px 0 0 #dcdcdc"></div>
<div style="left:1062px;top:712px;width:12px;height:79px;background:#c9c9c9;box-shadow:inset 1px 0 0 #b0b0b0"></div>
<div class="t s" style="left:5.5px;top:488px;font-size:12.4px;color:#3a3a3a;line-height:19px;letter-spacing:.05px">Added: /project/terry/Lunatics/Production/lunatics/Episodes/S1E01-Prolog/Seq/SR-SoyuzRollout/S1E01-SR-1-Gopher-anim.blend</div>
<div class="t s" style="left:5.5px;top:507px;font-size:12.4px;color:#3a3a3a;line-height:19px;letter-spacing:.05px">Added: /project/terry/Lunatics/Production/lunatics/Episodes/S1E01-Prolog/Seq/SU-SuitingUp/S1E01-SU-1-A0-Crate-anim.blend</div>
<div class="t s" style="left:5.5px;top:526px;font-size:12.4px;color:#3a3a3a;line-height:19px;letter-spacing:.05px">Added: /project/terry/Lunatics/Production/lunatics/Episodes/S1E01-Prolog/Seq/SU-SuitingUp/S1E01-SU-1-A1-Brushing-anim.blend</div>
<div class="t s" style="left:5.5px;top:545px;font-size:12.4px;color:#3a3a3a;line-height:19px;letter-spacing:.05px">Added: /project/terry/Lunatics/Production/lunatics/Episodes/S1E01-Prolog/Seq/SU-SuitingUp/S1E01-SU-1-A2-G_Couch-anim.blend</div>
<div class="t s" style="left:5.5px;top:564px;font-size:12.4px;color:#3a3a3a;line-height:19px;letter-spacing:.05px">Added: /project/terry/Lunatics/Production/lunatics/Episodes/S1E01-Prolog/Seq/SU-SuitingUp/S1E01-SU-1-A3-H_Squat-anim.blend</div>
<div class="t s" style="left:5.5px;top:583px;font-size:12.4px;color:#3a3a3a;line-height:19px;letter-spacing:.05px">Added: /project/terry/Lunatics/Production/lunatics/Episodes/S1E01-Prolog/Seq/SU-SuitingUp/S1E01-SU-1-A4A7_Techs-anim.blend</div>
<div class="t s" style="left:5.5px;top:602px;font-size:12.4px;color:#3a3a3a;line-height:19px;letter-spacing:.05px">Added: /project/terry/Lunatics/Production/lunatics/Episodes/S1E01-Prolog/Seq/SU-SuitingUp/S1E01-SU-1-A4_H_Couch-anim.blend</div>
<div class="t s" style="left:5.5px;top:621px;font-size:12.4px;color:#3a3a3a;line-height:19px;letter-spacing:.05px">Added: /project/terry/Lunatics/Production/lunatics/Episodes/S1E01-Prolog/Seq/SU-SuitingUp/S1E01-SU-1-A5A8-HG_Bkg-anim.blend</div>
<div class="t s" style="left:5.5px;top:640px;font-size:12.4px;color:#3a3a3a;line-height:19px;letter-spacing:.05px">Added: /project/terry/Lunatics/Production/lunatics/Episodes/S1E01-Prolog/Seq/SU-SuitingUp/S1E01-SU-1-A5A8-Sergei-anim.blend</div>
<div class="t s" style="left:5.5px;top:659px;font-size:12.4px;color:#3a3a3a;line-height:19px;letter-spacing:.05px">Added: /project/terry/Lunatics/Production/lunatics/Episodes/S1E01-Prolog/Seq/SU-SuitingUp/S1E01-SU-1-A8-ItsTime-anim.blend</div>
<div class="t s" style="left:5.5px;top:678px;font-size:12.4px;color:#3a3a3a;line-height:19px;letter-spacing:.05px">Added: /project/terry/Lunatics/Production/lunatics/Episodes/S1E01-Prolog/Seq/SU-SuitingUp/S1E01-SU-1-SuitingUp-cam.blend</div>
<div class="t s" style="left:5.5px;top:697px;font-size:12.4px;color:#3a3a3a;line-height:19px;letter-spacing:.05px">Committed revision 705.</div>
<div class="t s" style="left:5.5px;top:716px;font-size:12.4px;color:#3a3a3a;line-height:19px;letter-spacing:.05px">Updating...</div>
<div class="t s" style="left:5.5px;top:735px;font-size:12.4px;color:#3a3a3a;line-height:19px;letter-spacing:.05px">Ready</div>
<div class="t s" style="left:9.5px;top:795.5px;font-size:12.4px;color:#5e5e5e;line-height:20px">Ready</div>
<svg style="left:1060px;top:804px;" width="14" height="14" viewBox="0 0 14 14"><path d="M12 2v1M9 5v1M12 5v1M6 8v1M9 8v1M12 8v1M3 11v1M6 11v1M9 11v1M12 11v1" stroke="#fff" stroke-width="1.500"/><path d="M11 2v1M8 5v1M11 5v1M5 8v1M8 8v1M11 8v1M2 11v1M5 11v1M8 11v1M11 11v1" stroke="#cfcfcf" stroke-width="1"/></svg>
</div>
</body></html>
